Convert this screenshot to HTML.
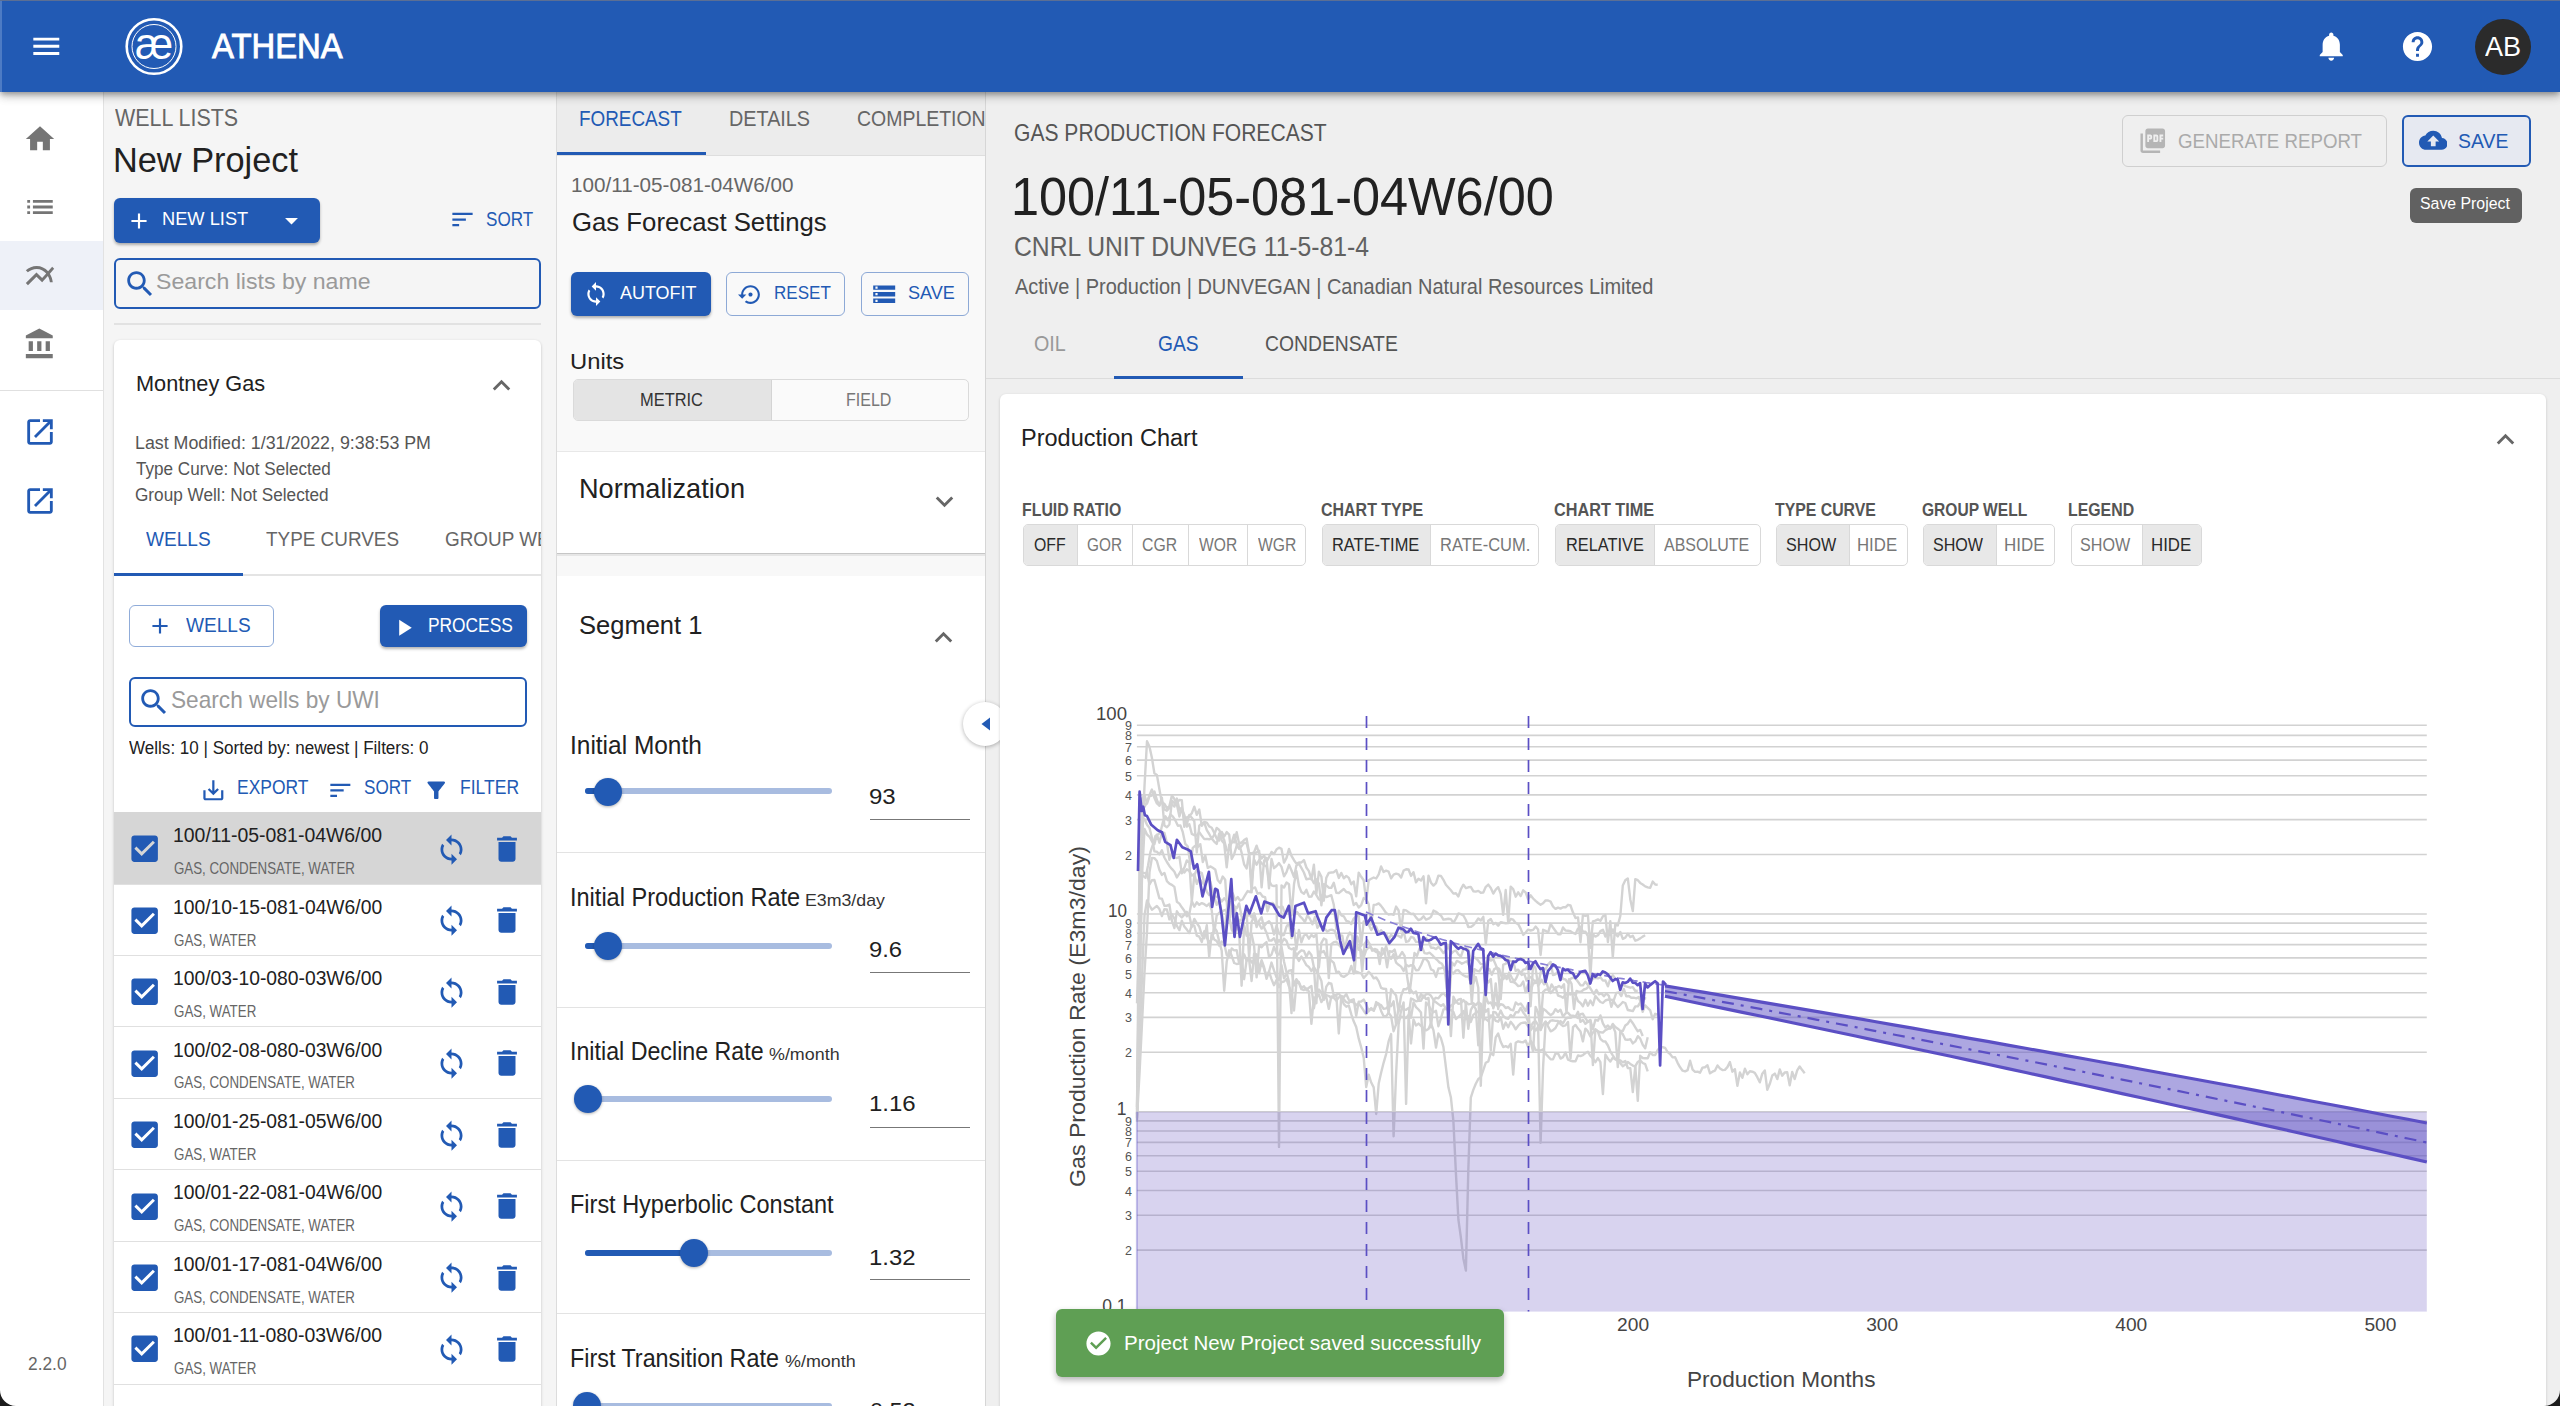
<!DOCTYPE html>
<html><head><meta charset="utf-8"><style>
html,body{margin:0;padding:0;width:2560px;height:1406px;overflow:hidden;background:#efefef;}
body{position:relative;font-family:"Liberation Sans",sans-serif;}
.t{position:absolute;white-space:nowrap;}
.r{position:absolute;}
</style></head><body>
<div class="r" style="left:0px;top:92px;width:103px;height:1314px;background:#fff"></div><div class="r" style="left:103px;top:92px;width:1px;height:1314px;background:#e2e2e2"></div><div class="r" style="left:104px;top:92px;width:452px;height:1314px;background:#f5f5f5"></div><div class="r" style="left:556px;top:92px;width:1px;height:1314px;background:#dcdcdc"></div><div class="r" style="left:557px;top:92px;width:428px;height:63px;background:#ececec"></div><div class="r" style="left:557px;top:155px;width:428px;height:1px;background:#dedede"></div><div class="r" style="left:557px;top:156px;width:428px;height:295px;background:#f9f9f9"></div><div class="r" style="left:557px;top:451px;width:428px;height:102px;background:#fff"></div><div class="r" style="left:557px;top:451px;width:428px;height:1px;background:#e8e8e8"></div><div class="r" style="left:557px;top:553px;width:428px;height:1px;background:#c6c6c6"></div><div class="r" style="left:557px;top:554px;width:428px;height:2px;background:#e6e6e6"></div><div class="r" style="left:557px;top:556px;width:428px;height:20px;background:#f8f8f8"></div><div class="r" style="left:557px;top:576px;width:428px;height:830px;background:#fff"></div><div class="r" style="left:557px;top:852px;width:428px;height:1px;background:#e3e3e3"></div><div class="r" style="left:557px;top:1007px;width:428px;height:1px;background:#e3e3e3"></div><div class="r" style="left:557px;top:1160px;width:428px;height:1px;background:#e3e3e3"></div><div class="r" style="left:557px;top:1313px;width:428px;height:1px;background:#e3e3e3"></div><div class="r" style="left:985px;top:92px;width:1px;height:1314px;background:#d6d6d6"></div><div class="r" style="left:0px;top:241px;width:103px;height:69px;background:#eef1f8"></div><svg class="r" style="left:23.0px;top:122.0px" width="34" height="34" viewBox="0 0 24 24"><path fill="#757575" d="M10 20v-6h4v6h5v-8h3L12 3 2 12h3v8z"/></svg><svg class="r" style="left:23.0px;top:190.0px" width="34" height="34" viewBox="0 0 24 24"><path fill="#757575" d="M3 13h2v-2H3v2zm0 4h2v-2H3v2zm0-8h2V7H3v2zm4 4h14v-2H7v2zm0 4h14v-2H7v2zM7 7v2h14V7H7z"/></svg><svg class="r" style="left:23.0px;top:259.0px" width="34" height="34" viewBox="0 0 24 24"><path fill="#757575" d="M22 6.92l-1.41-1.41-2.85 3.21C15.68 6.4 12.83 5 9.61 5 6.72 5 4.07 6.16 2 8l1.42 1.42C5.12 7.93 7.27 7 9.61 7c2.74 0 5.09 1.26 6.77 3.24l-2.88 3.24-4-4L2 16.99l1.5 1.5 6-6.01 4 4 4.05-4.55c.75 1.35 1.25 2.9 1.44 4.55H21c-.22-2.3-.95-4.39-2.04-6.14L22 6.92z"/></svg><svg class="r" style="left:23.0px;top:327.0px" width="34" height="34" viewBox="0 0 24 24"><path fill="#757575" d="M4 10v7h3v-7H4zm6 0v7h3v-7h-3zM2 22h19v-3H2v3zm14-12v7h3v-7h-3zm-4.5-9L2 6v2h19V6l-9.5-5z"/></svg><div class="r" style="left:0px;top:390px;width:103px;height:1px;background:#e0e0e0"></div><svg class="r" style="left:23.0px;top:415.0px" width="34" height="34" viewBox="0 0 24 24"><path fill="#225ab4" d="M19 19H5V5h7V3H5c-1.11 0-2 .9-2 2v14c0 1.1.89 2 2 2h14c1.1 0 2-.9 2-2v-7h-2v7zM14 3v2h3.59l-9.83 9.83 1.41 1.41L19 6.41V10h2V3h-7z"/></svg><svg class="r" style="left:23.0px;top:484.0px" width="34" height="34" viewBox="0 0 24 24"><path fill="#225ab4" d="M19 19H5V5h7V3H5c-1.11 0-2 .9-2 2v14c0 1.1.89 2 2 2h14c1.1 0 2-.9 2-2v-7h-2v7zM14 3v2h3.59l-9.83 9.83 1.41 1.41L19 6.41V10h2V3h-7z"/></svg><div class="t" style="left:28.33px;top:1356.31px;font-size:17.68px;line-height:17.68px;color:#666;transform:scaleX(0.9805);transform-origin:0 0;"><span>2.2.0</span></div><div class="t" style="left:115.41px;top:107.01px;font-size:23.19px;line-height:23.19px;color:#666;transform:scaleX(0.9249);transform-origin:0 0;"><span>WELL LISTS</span></div><div class="t" style="left:113.18px;top:143.01px;font-size:34.78px;line-height:34.78px;color:#212121;transform:scaleX(0.9869);transform-origin:0 0;"><span>New Project</span></div><div class="r" style="left:114px;top:198px;width:206px;height:45px;background:#225ab4;border-radius:6px;box-shadow:0 2px 3px rgba(0,0,0,.3)"></div><svg class="r" style="left:125.5px;top:207.5px" width="26" height="26" viewBox="0 0 24 24"><path fill="#fff" d="M19 13h-6v6h-2v-6H5v-2h6V5h2v6h6v2z"/></svg><div class="t" style="left:162.20px;top:209.80px;font-size:18.84px;line-height:18.84px;color:#fff;transform:scaleX(0.9695);transform-origin:0 0;"><span>NEW LIST</span></div><svg class="r" style="left:276.1px;top:204.9px" width="31" height="31" viewBox="0 0 24 24"><path fill="#fff" d="M7 10l5 5 5-5z"/></svg><svg class="r" style="left:449.0px;top:205.8px" width="27" height="27" viewBox="0 0 24 24"><path fill="#225ab4" d="M3 18h6v-2H3v2zM3 6v2h18V6H3zm0 7h12v-2H3v2z"/></svg><div class="t" style="left:486.22px;top:209.51px;font-size:19.57px;line-height:19.57px;color:#225ab4;transform:scaleX(0.8734);transform-origin:0 0;"><span>SORT</span></div><div class="r" style="left:114px;top:258px;width:427px;height:51px;border:2px solid #225ab4;border-radius:6px;box-sizing:border-box"></div><svg class="r" style="left:122.9px;top:266.9px" width="34" height="34" viewBox="0 0 24 24"><path fill="#225ab4" d="M15.5 14h-.79l-.28-.27C15.41 12.59 16 11.11 16 9.5 16 5.91 13.09 3 9.5 3S3 5.91 3 9.5 5.91 16 9.5 16c1.61 0 3.09-.59 4.23-1.57l.27.28v.79l5 4.99L20.49 19l-4.99-5zm-6 0C7.01 14 5 11.99 5 9.5S7.01 5 9.5 5 14 7.01 14 9.5 11.99 14 9.5 14z"/></svg><div class="t" style="left:156.45px;top:271.30px;font-size:22.46px;line-height:22.46px;color:#9a9a9a;transform:scaleX(1.0296);transform-origin:0 0;"><span>Search lists by name</span></div><div class="r" style="left:114px;top:323px;width:427px;height:2px;background:#e2e2e2"></div><div class="r" style="left:114px;top:340px;width:427px;height:1090px;background:#fff;border-radius:6px;box-shadow:0 1px 3px rgba(0,0,0,.22)"></div><div class="t" style="left:135.52px;top:372.61px;font-size:21.59px;line-height:21.59px;color:#212121;transform:scaleX(1.0056);transform-origin:0 0;"><span>Montney Gas</span></div><svg class="r" style="left:484.0px;top:367.9px" width="35" height="35" viewBox="0 0 24 24"><path fill="#666" d="M7.41 15.41L12 10.83l4.59 4.58L18 14l-6-6-6 6z"/></svg><div class="t" style="left:134.64px;top:434.20px;font-size:18.12px;line-height:18.12px;color:#555;transform:scaleX(0.9831);transform-origin:0 0;"><span>Last Modified: 1/31/2022, 9:38:53 PM</span></div><div class="t" style="left:135.72px;top:460.31px;font-size:18.12px;line-height:18.12px;color:#555;transform:scaleX(0.9444);transform-origin:0 0;"><span>Type Curve: Not Selected</span></div><div class="t" style="left:135.24px;top:485.70px;font-size:18.12px;line-height:18.12px;color:#555;transform:scaleX(0.9494);transform-origin:0 0;"><span>Group Well: Not Selected</span></div><div class="t" style="left:146.22px;top:529.00px;font-size:20.29px;line-height:20.29px;color:#225ab4;transform:scaleX(0.9403);transform-origin:0 0;"><span>WELLS</span></div><div class="t" style="left:265.88px;top:529.00px;font-size:20.29px;line-height:20.29px;color:#666;transform:scaleX(0.9315);transform-origin:0 0;"><span>TYPE CURVES</span></div><div class="r" style="left:0;top:0;width:541px;height:1406px;overflow:hidden"><div class="t" style="left:444.55px;top:529.00px;font-size:20.29px;line-height:20.29px;color:#666;transform:scaleX(0.9313);transform-origin:0 0;"><span>GROUP WELLS</span></div></div><div class="r" style="left:114px;top:574px;width:427px;height:2px;background:#e4e4e4"></div><div class="r" style="left:114px;top:573px;width:129px;height:3px;background:#225ab4"></div><div class="r" style="left:129px;top:605px;width:145px;height:42px;border:1px solid rgba(34,90,180,.5);border-radius:6px;box-sizing:border-box"></div><svg class="r" style="left:146.8px;top:613.0px" width="26" height="26" viewBox="0 0 24 24"><path fill="#225ab4" d="M19 13h-6v6h-2v-6H5v-2h6V5h2v6h6v2z"/></svg><div class="t" style="left:186.42px;top:614.92px;font-size:20.72px;line-height:20.72px;color:#225ab4;transform:scaleX(0.9204);transform-origin:0 0;"><span>WELLS</span></div><div class="r" style="left:380px;top:605px;width:147px;height:42px;background:#225ab4;border-radius:6px;box-shadow:0 2px 3px rgba(0,0,0,.3)"></div><svg class="r" style="left:390.1px;top:614.2px" width="27.5" height="27.5" viewBox="0 0 24 24"><path fill="#fff" d="M8 5v14l11-7z"/></svg><div class="t" style="left:427.98px;top:614.51px;font-size:20.72px;line-height:20.72px;color:#fff;transform:scaleX(0.8371);transform-origin:0 0;"><span>PROCESS</span></div><div class="r" style="left:129px;top:677px;width:398px;height:50px;border:2px solid #225ab4;border-radius:6px;box-sizing:border-box"></div><svg class="r" style="left:136.9px;top:684.9px" width="34" height="34" viewBox="0 0 24 24"><path fill="#225ab4" d="M15.5 14h-.79l-.28-.27C15.41 12.59 16 11.11 16 9.5 16 5.91 13.09 3 9.5 3S3 5.91 3 9.5 5.91 16 9.5 16c1.61 0 3.09-.59 4.23-1.57l.27.28v.79l5 4.99L20.49 19l-4.99-5zm-6 0C7.01 14 5 11.99 5 9.5S7.01 5 9.5 5 14 7.01 14 9.5 11.99 14 9.5 14z"/></svg><div class="t" style="left:171.37px;top:688.51px;font-size:23.19px;line-height:23.19px;color:#9a9a9a;transform:scaleX(0.9767);transform-origin:0 0;"><span>Search wells by UWI</span></div><div class="t" style="left:128.93px;top:738.51px;font-size:18.12px;line-height:18.12px;color:#212121;transform:scaleX(0.9417);transform-origin:0 0;"><span>Wells: 10 | Sorted by: newest | Filters: 0</span></div><svg class="r" style="left:199.6px;top:776.9px" width="26.7" height="26.7" viewBox="0 0 24 24"><path fill="#225ab4" d="M19 12v7H5v-7H3v7c0 1.1.9 2 2 2h14c1.1 0 2-.9 2-2v-7h-2zm-6 .67l2.59-2.58L17 11.5l-5 5-5-5 1.41-1.41L11 12.67V3h2z"/></svg><div class="t" style="left:236.57px;top:778.41px;font-size:19.86px;line-height:19.86px;color:#225ab4;transform:scaleX(0.8783);transform-origin:0 0;"><span>EXPORT</span></div><svg class="r" style="left:326.5px;top:776.9px" width="26.7" height="26.7" viewBox="0 0 24 24"><path fill="#225ab4" d="M3 18h6v-2H3v2zM3 6v2h18V6H3zm0 7h12v-2H3v2z"/></svg><div class="t" style="left:364.42px;top:778.41px;font-size:19.86px;line-height:19.86px;color:#225ab4;transform:scaleX(0.8604);transform-origin:0 0;"><span>SORT</span></div><svg class="r" style="left:423.4px;top:777.0px" width="26.5" height="26.5" viewBox="0 0 24 24"><path fill="#225ab4" d="M4.25 5.61C6.27 8.2 10 13 10 13v6c0 .55.45 1 1 1h2c.55 0 1-.45 1-1v-6s3.72-4.8 5.74-7.39c.51-.66.04-1.61-.79-1.61H5.04c-.83 0-1.3.95-.79 1.61z"/></svg><div class="t" style="left:460.46px;top:778.41px;font-size:19.86px;line-height:19.86px;color:#225ab4;transform:scaleX(0.8828);transform-origin:0 0;"><span>FILTER</span></div><div class="r" style="left:114px;top:812px;width:427px;height:72px;background:#d6d6d6"></div><div class="r" style="left:114px;top:884px;width:427px;height:1px;background:#e0e0e0"></div><div class="r" style="left:114px;top:955px;width:427px;height:1px;background:#e0e0e0"></div><div class="r" style="left:114px;top:1026px;width:427px;height:1px;background:#e0e0e0"></div><div class="r" style="left:114px;top:1098px;width:427px;height:1px;background:#e0e0e0"></div><div class="r" style="left:114px;top:1169px;width:427px;height:1px;background:#e0e0e0"></div><div class="r" style="left:114px;top:1241px;width:427px;height:1px;background:#e0e0e0"></div><div class="r" style="left:114px;top:1312px;width:427px;height:1px;background:#e0e0e0"></div><div class="r" style="left:114px;top:1384px;width:427px;height:1px;background:#e0e0e0"></div><svg class="r" style="left:126.8px;top:831.4px" width="35.3" height="35.3" viewBox="0 0 24 24"><path fill="#225ab4" d="M19 3H5c-1.11 0-2 .9-2 2v14c0 1.1.89 2 2 2h14c1.11 0 2-.9 2-2V5c0-1.1-.89-2-2-2zm-9 14l-5-5 1.41-1.41L10 14.17l7.59-7.59L19 8l-9 9z"/></svg><div class="t" style="left:173.12px;top:825.22px;font-size:20.29px;line-height:20.29px;color:#212121;transform:scaleX(0.9577);transform-origin:0 0;"><span>100/11-05-081-04W6/00</span></div><div class="t" style="left:173.93px;top:861.11px;font-size:16.81px;line-height:16.81px;color:#666;transform:scaleX(0.7925);transform-origin:0 0;"><span>GAS, CONDENSATE, WATER</span></div><svg class="r" style="left:435.0px;top:832.8px" width="33" height="33" viewBox="0 0 24 24"><path fill="#225ab4" d="M12 4V1L8 5l4 4V6c3.31 0 6 2.69 6 6 0 1.01-.25 1.97-.7 2.8l1.46 1.46C19.54 15.03 20 13.57 20 12c0-4.42-3.58-8-8-8zm0 14c-3.31 0-6-2.69-6-6 0-1.01.25-1.97.7-2.8L5.24 7.74C4.46 8.97 4 10.43 4 12c0 4.42 3.58 8 8 8v3l4-4-4-4v3z"/></svg><svg class="r" style="left:490.1px;top:832.0px" width="34" height="34" viewBox="0 0 24 24"><path fill="#225ab4" d="M6 19c0 1.1.9 2 2 2h8c1.1 0 2-.9 2-2V7H6v12zM19 4h-3.5l-1-1h-5l-1 1H5v2h14V4z"/></svg><svg class="r" style="left:126.8px;top:902.8px" width="35.3" height="35.3" viewBox="0 0 24 24"><path fill="#225ab4" d="M19 3H5c-1.11 0-2 .9-2 2v14c0 1.1.89 2 2 2h14c1.11 0 2-.9 2-2V5c0-1.1-.89-2-2-2zm-9 14l-5-5 1.41-1.41L10 14.17l7.59-7.59L19 8l-9 9z"/></svg><div class="t" style="left:173.13px;top:896.64px;font-size:20.29px;line-height:20.29px;color:#212121;transform:scaleX(0.9511);transform-origin:0 0;"><span>100/10-15-081-04W6/00</span></div><div class="t" style="left:173.93px;top:932.54px;font-size:16.81px;line-height:16.81px;color:#666;transform:scaleX(0.7942);transform-origin:0 0;"><span>GAS, WATER</span></div><svg class="r" style="left:435.0px;top:904.2px" width="33" height="33" viewBox="0 0 24 24"><path fill="#225ab4" d="M12 4V1L8 5l4 4V6c3.31 0 6 2.69 6 6 0 1.01-.25 1.97-.7 2.8l1.46 1.46C19.54 15.03 20 13.57 20 12c0-4.42-3.58-8-8-8zm0 14c-3.31 0-6-2.69-6-6 0-1.01.25-1.97.7-2.8L5.24 7.74C4.46 8.97 4 10.43 4 12c0 4.42 3.58 8 8 8v3l4-4-4-4v3z"/></svg><svg class="r" style="left:490.1px;top:903.4px" width="34" height="34" viewBox="0 0 24 24"><path fill="#225ab4" d="M6 19c0 1.1.9 2 2 2h8c1.1 0 2-.9 2-2V7H6v12zM19 4h-3.5l-1-1h-5l-1 1H5v2h14V4z"/></svg><svg class="r" style="left:126.8px;top:974.2px" width="35.3" height="35.3" viewBox="0 0 24 24"><path fill="#225ab4" d="M19 3H5c-1.11 0-2 .9-2 2v14c0 1.1.89 2 2 2h14c1.11 0 2-.9 2-2V5c0-1.1-.89-2-2-2zm-9 14l-5-5 1.41-1.41L10 14.17l7.59-7.59L19 8l-9 9z"/></svg><div class="t" style="left:173.13px;top:968.08px;font-size:20.29px;line-height:20.29px;color:#212121;transform:scaleX(0.9511);transform-origin:0 0;"><span>100/03-10-080-03W6/00</span></div><div class="t" style="left:173.93px;top:1003.97px;font-size:16.81px;line-height:16.81px;color:#666;transform:scaleX(0.7942);transform-origin:0 0;"><span>GAS, WATER</span></div><svg class="r" style="left:435.0px;top:975.7px" width="33" height="33" viewBox="0 0 24 24"><path fill="#225ab4" d="M12 4V1L8 5l4 4V6c3.31 0 6 2.69 6 6 0 1.01-.25 1.97-.7 2.8l1.46 1.46C19.54 15.03 20 13.57 20 12c0-4.42-3.58-8-8-8zm0 14c-3.31 0-6-2.69-6-6 0-1.01.25-1.97.7-2.8L5.24 7.74C4.46 8.97 4 10.43 4 12c0 4.42 3.58 8 8 8v3l4-4-4-4v3z"/></svg><svg class="r" style="left:490.1px;top:974.9px" width="34" height="34" viewBox="0 0 24 24"><path fill="#225ab4" d="M6 19c0 1.1.9 2 2 2h8c1.1 0 2-.9 2-2V7H6v12zM19 4h-3.5l-1-1h-5l-1 1H5v2h14V4z"/></svg><svg class="r" style="left:126.8px;top:1045.6px" width="35.3" height="35.3" viewBox="0 0 24 24"><path fill="#225ab4" d="M19 3H5c-1.11 0-2 .9-2 2v14c0 1.1.89 2 2 2h14c1.11 0 2-.9 2-2V5c0-1.1-.89-2-2-2zm-9 14l-5-5 1.41-1.41L10 14.17l7.59-7.59L19 8l-9 9z"/></svg><div class="t" style="left:173.13px;top:1039.50px;font-size:20.29px;line-height:20.29px;color:#212121;transform:scaleX(0.9511);transform-origin:0 0;"><span>100/02-08-080-03W6/00</span></div><div class="t" style="left:173.93px;top:1075.40px;font-size:16.81px;line-height:16.81px;color:#666;transform:scaleX(0.7925);transform-origin:0 0;"><span>GAS, CONDENSATE, WATER</span></div><svg class="r" style="left:435.0px;top:1047.1px" width="33" height="33" viewBox="0 0 24 24"><path fill="#225ab4" d="M12 4V1L8 5l4 4V6c3.31 0 6 2.69 6 6 0 1.01-.25 1.97-.7 2.8l1.46 1.46C19.54 15.03 20 13.57 20 12c0-4.42-3.58-8-8-8zm0 14c-3.31 0-6-2.69-6-6 0-1.01.25-1.97.7-2.8L5.24 7.74C4.46 8.97 4 10.43 4 12c0 4.42 3.58 8 8 8v3l4-4-4-4v3z"/></svg><svg class="r" style="left:490.1px;top:1046.3px" width="34" height="34" viewBox="0 0 24 24"><path fill="#225ab4" d="M6 19c0 1.1.9 2 2 2h8c1.1 0 2-.9 2-2V7H6v12zM19 4h-3.5l-1-1h-5l-1 1H5v2h14V4z"/></svg><svg class="r" style="left:126.8px;top:1117.1px" width="35.3" height="35.3" viewBox="0 0 24 24"><path fill="#225ab4" d="M19 3H5c-1.11 0-2 .9-2 2v14c0 1.1.89 2 2 2h14c1.11 0 2-.9 2-2V5c0-1.1-.89-2-2-2zm-9 14l-5-5 1.41-1.41L10 14.17l7.59-7.59L19 8l-9 9z"/></svg><div class="t" style="left:173.13px;top:1110.94px;font-size:20.29px;line-height:20.29px;color:#212121;transform:scaleX(0.9511);transform-origin:0 0;"><span>100/01-25-081-05W6/00</span></div><div class="t" style="left:173.93px;top:1146.83px;font-size:16.81px;line-height:16.81px;color:#666;transform:scaleX(0.7942);transform-origin:0 0;"><span>GAS, WATER</span></div><svg class="r" style="left:435.0px;top:1118.5px" width="33" height="33" viewBox="0 0 24 24"><path fill="#225ab4" d="M12 4V1L8 5l4 4V6c3.31 0 6 2.69 6 6 0 1.01-.25 1.97-.7 2.8l1.46 1.46C19.54 15.03 20 13.57 20 12c0-4.42-3.58-8-8-8zm0 14c-3.31 0-6-2.69-6-6 0-1.01.25-1.97.7-2.8L5.24 7.74C4.46 8.97 4 10.43 4 12c0 4.42 3.58 8 8 8v3l4-4-4-4v3z"/></svg><svg class="r" style="left:490.1px;top:1117.7px" width="34" height="34" viewBox="0 0 24 24"><path fill="#225ab4" d="M6 19c0 1.1.9 2 2 2h8c1.1 0 2-.9 2-2V7H6v12zM19 4h-3.5l-1-1h-5l-1 1H5v2h14V4z"/></svg><svg class="r" style="left:126.8px;top:1188.5px" width="35.3" height="35.3" viewBox="0 0 24 24"><path fill="#225ab4" d="M19 3H5c-1.11 0-2 .9-2 2v14c0 1.1.89 2 2 2h14c1.11 0 2-.9 2-2V5c0-1.1-.89-2-2-2zm-9 14l-5-5 1.41-1.41L10 14.17l7.59-7.59L19 8l-9 9z"/></svg><div class="t" style="left:173.13px;top:1182.36px;font-size:20.29px;line-height:20.29px;color:#212121;transform:scaleX(0.9511);transform-origin:0 0;"><span>100/01-22-081-04W6/00</span></div><div class="t" style="left:173.93px;top:1218.26px;font-size:16.81px;line-height:16.81px;color:#666;transform:scaleX(0.7925);transform-origin:0 0;"><span>GAS, CONDENSATE, WATER</span></div><svg class="r" style="left:435.0px;top:1190.0px" width="33" height="33" viewBox="0 0 24 24"><path fill="#225ab4" d="M12 4V1L8 5l4 4V6c3.31 0 6 2.69 6 6 0 1.01-.25 1.97-.7 2.8l1.46 1.46C19.54 15.03 20 13.57 20 12c0-4.42-3.58-8-8-8zm0 14c-3.31 0-6-2.69-6-6 0-1.01.25-1.97.7-2.8L5.24 7.74C4.46 8.97 4 10.43 4 12c0 4.42 3.58 8 8 8v3l4-4-4-4v3z"/></svg><svg class="r" style="left:490.1px;top:1189.2px" width="34" height="34" viewBox="0 0 24 24"><path fill="#225ab4" d="M6 19c0 1.1.9 2 2 2h8c1.1 0 2-.9 2-2V7H6v12zM19 4h-3.5l-1-1h-5l-1 1H5v2h14V4z"/></svg><svg class="r" style="left:126.8px;top:1259.9px" width="35.3" height="35.3" viewBox="0 0 24 24"><path fill="#225ab4" d="M19 3H5c-1.11 0-2 .9-2 2v14c0 1.1.89 2 2 2h14c1.11 0 2-.9 2-2V5c0-1.1-.89-2-2-2zm-9 14l-5-5 1.41-1.41L10 14.17l7.59-7.59L19 8l-9 9z"/></svg><div class="t" style="left:173.13px;top:1253.80px;font-size:20.29px;line-height:20.29px;color:#212121;transform:scaleX(0.9511);transform-origin:0 0;"><span>100/01-17-081-04W6/00</span></div><div class="t" style="left:173.93px;top:1289.70px;font-size:16.81px;line-height:16.81px;color:#666;transform:scaleX(0.7925);transform-origin:0 0;"><span>GAS, CONDENSATE, WATER</span></div><svg class="r" style="left:435.0px;top:1261.4px" width="33" height="33" viewBox="0 0 24 24"><path fill="#225ab4" d="M12 4V1L8 5l4 4V6c3.31 0 6 2.69 6 6 0 1.01-.25 1.97-.7 2.8l1.46 1.46C19.54 15.03 20 13.57 20 12c0-4.42-3.58-8-8-8zm0 14c-3.31 0-6-2.69-6-6 0-1.01.25-1.97.7-2.8L5.24 7.74C4.46 8.97 4 10.43 4 12c0 4.42 3.58 8 8 8v3l4-4-4-4v3z"/></svg><svg class="r" style="left:490.1px;top:1260.6px" width="34" height="34" viewBox="0 0 24 24"><path fill="#225ab4" d="M6 19c0 1.1.9 2 2 2h8c1.1 0 2-.9 2-2V7H6v12zM19 4h-3.5l-1-1h-5l-1 1H5v2h14V4z"/></svg><svg class="r" style="left:126.8px;top:1331.4px" width="35.3" height="35.3" viewBox="0 0 24 24"><path fill="#225ab4" d="M19 3H5c-1.11 0-2 .9-2 2v14c0 1.1.89 2 2 2h14c1.11 0 2-.9 2-2V5c0-1.1-.89-2-2-2zm-9 14l-5-5 1.41-1.41L10 14.17l7.59-7.59L19 8l-9 9z"/></svg><div class="t" style="left:173.12px;top:1325.22px;font-size:20.29px;line-height:20.29px;color:#212121;transform:scaleX(0.9577);transform-origin:0 0;"><span>100/01-11-080-03W6/00</span></div><div class="t" style="left:173.93px;top:1361.12px;font-size:16.81px;line-height:16.81px;color:#666;transform:scaleX(0.7942);transform-origin:0 0;"><span>GAS, WATER</span></div><svg class="r" style="left:435.0px;top:1332.8px" width="33" height="33" viewBox="0 0 24 24"><path fill="#225ab4" d="M12 4V1L8 5l4 4V6c3.31 0 6 2.69 6 6 0 1.01-.25 1.97-.7 2.8l1.46 1.46C19.54 15.03 20 13.57 20 12c0-4.42-3.58-8-8-8zm0 14c-3.31 0-6-2.69-6-6 0-1.01.25-1.97.7-2.8L5.24 7.74C4.46 8.97 4 10.43 4 12c0 4.42 3.58 8 8 8v3l4-4-4-4v3z"/></svg><svg class="r" style="left:490.1px;top:1332.0px" width="34" height="34" viewBox="0 0 24 24"><path fill="#225ab4" d="M6 19c0 1.1.9 2 2 2h8c1.1 0 2-.9 2-2V7H6v12zM19 4h-3.5l-1-1h-5l-1 1H5v2h14V4z"/></svg><div class="t" style="left:579.35px;top:108.41px;font-size:21.16px;line-height:21.16px;color:#225ab4;transform:scaleX(0.8913);transform-origin:0 0;"><span>FORECAST</span></div><div class="t" style="left:729.07px;top:108.41px;font-size:21.16px;line-height:21.16px;color:#666;transform:scaleX(0.9362);transform-origin:0 0;"><span>DETAILS</span></div><div class="r" style="left:0;top:0;width:985px;height:1406px;overflow:hidden"><div class="t" style="left:856.91px;top:108.41px;font-size:21.16px;line-height:21.16px;color:#666;transform:scaleX(0.9198);transform-origin:0 0;"><span>COMPLETION</span></div></div><div class="r" style="left:557px;top:152px;width:148.5px;height:3px;background:#225ab4"></div><div class="t" style="left:571.23px;top:176.01px;font-size:19.57px;line-height:19.57px;color:#666;transform:scaleX(1.0562);transform-origin:0 0;"><span>100/11-05-081-04W6/00</span></div><div class="t" style="left:571.50px;top:208.60px;font-size:26.09px;line-height:26.09px;color:#212121;transform:scaleX(0.9873);transform-origin:0 0;"><span>Gas Forecast Settings</span></div><div class="r" style="left:571.4px;top:272px;width:140.0px;height:43.80000000000001px;background:#225ab4;border-radius:6px;box-shadow:0 2px 3px rgba(0,0,0,.3)"></div><svg class="r" style="left:582.8px;top:281.0px" width="26" height="26" viewBox="0 0 24 24"><path fill="#fff" d="M12 4V1L8 5l4 4V6c3.31 0 6 2.69 6 6 0 1.01-.25 1.97-.7 2.8l1.46 1.46C19.54 15.03 20 13.57 20 12c0-4.42-3.58-8-8-8zm0 14c-3.31 0-6-2.69-6-6 0-1.01.25-1.97.7-2.8L5.24 7.74C4.46 8.97 4 10.43 4 12c0 4.42 3.58 8 8 8v3l4-4-4-4v3z"/></svg><div class="t" style="left:619.96px;top:283.00px;font-size:19.13px;line-height:19.13px;color:#fff;transform:scaleX(0.9391);transform-origin:0 0;"><span>AUTOFIT</span></div><div class="r" style="left:726.4px;top:272px;width:118.60000000000002px;height:44px;border:1px solid rgba(34,90,180,.5);border-radius:6px;box-sizing:border-box"></div><svg class="r" style="left:737.7px;top:281.5px" width="25" height="25" viewBox="0 0 24 24"><path fill="#225ab4" d="M14 12c0-1.1-.9-2-2-2s-2 .9-2 2 .9 2 2 2 2-.9 2-2zm-2-9c-4.97 0-9 4.03-9 9H0l4 4 4-4H5c0-3.87 3.13-7 7-7s7 3.13 7 7-3.13 7-7 7c-1.51 0-2.91-.49-4.06-1.3l-1.42 1.44C8.04 20.3 9.94 21 12 21c4.97 0 9-4.03 9-9s-4.03-9-9-9z"/></svg><div class="t" style="left:773.60px;top:283.00px;font-size:19.13px;line-height:19.13px;color:#225ab4;transform:scaleX(0.8912);transform-origin:0 0;"><span>RESET</span></div><div class="r" style="left:860.6px;top:272px;width:108.69999999999993px;height:44px;border:1px solid rgba(34,90,180,.5);border-radius:6px;box-sizing:border-box"></div><svg class="r" style="left:870.5px;top:280.8px" width="26.4" height="26.4" viewBox="0 0 24 24"><path fill="#225ab4" d="M2 20h20v-4H2v4zm2-3h2v2H4v-2zM2 4v4h20V4H2zm4 3H4V5h2v2zm-4 7h20v-4H2v4zm2-3h2v2H4v-2z"/></svg><div class="t" style="left:908.48px;top:283.00px;font-size:19.13px;line-height:19.13px;color:#225ab4;transform:scaleX(0.9450);transform-origin:0 0;"><span>SAVE</span></div><div class="t" style="left:570.16px;top:349.70px;font-size:22.75px;line-height:22.75px;color:#212121;transform:scaleX(1.0473);transform-origin:0 0;"><span>Units</span></div><div class="r" style="left:573px;top:379px;width:396px;height:42px;border:1px solid #dadada;border-radius:5px;box-sizing:border-box;background:#fafafa;overflow:hidden"></div><div class="r" style="left:574px;top:380px;width:196.70000000000005px;height:40px;background:#e4e4e4;border-radius:4px 0 0 4px"></div><div class="r" style="left:770.7px;top:380px;width:1.0px;height:40px;background:#d4d4d4"></div><div class="t" style="left:639.65px;top:391.40px;font-size:18.26px;line-height:18.26px;color:#333;transform:scaleX(0.9002);transform-origin:0 0;"><span>METRIC</span></div><div class="t" style="left:846.39px;top:391.40px;font-size:18.26px;line-height:18.26px;color:#777;transform:scaleX(0.8772);transform-origin:0 0;"><span>FIELD</span></div><div class="t" style="left:578.77px;top:474.71px;font-size:27.54px;line-height:27.54px;color:#212121;transform:scaleX(0.9862);transform-origin:0 0;"><span>Normalization</span></div><svg class="r" style="left:926.7px;top:483.5px" width="35" height="35" viewBox="0 0 24 24"><path fill="#666" d="M7.41 8.59L12 13.17l4.59-4.58L18 10l-6 6-6-6 1.41-1.41z"/></svg><div class="t" style="left:578.84px;top:611.50px;font-size:26.09px;line-height:26.09px;color:#212121;transform:scaleX(0.9784);transform-origin:0 0;"><span>Segment 1</span></div><svg class="r" style="left:926.0px;top:619.5px" width="35" height="35" viewBox="0 0 24 24"><path fill="#666" d="M7.41 15.41L12 10.83l4.59 4.58L18 14l-6-6-6 6z"/></svg><div class="t" style="left:569.74px;top:733.01px;font-size:24.93px;line-height:24.93px;color:#212121;transform:scaleX(0.9812);transform-origin:0 0;"><span>Initial Month</span></div><div class="r" style="left:585.4px;top:788px;width:247.10000000000002px;height:6px;background:#a8bce0;border-radius:3px"></div><div class="r" style="left:585.4px;top:788px;width:22.600000000000023px;height:6px;background:#225ab4;border-radius:3px"></div><div class="r" style="left:594px;top:777.5px;width:28px;height:28px;border-radius:50%;background:#225ab4;box-shadow:0 1px 3px rgba(0,0,0,.3)"></div><div class="t" style="left:869.38px;top:786.02px;font-size:22.61px;line-height:22.61px;color:#212121;transform:scaleX(1.0605);transform-origin:0 0;"><span>93</span></div><div class="r" style="left:870px;top:819px;width:100px;height:1px;background:#777"></div><div class="t" style="left:569.83px;top:884.71px;font-size:24.93px;line-height:24.93px;color:#212121;transform:scaleX(0.9442);transform-origin:0 0;"><span>Initial Production Rate</span></div><div class="t" style="left:805.14px;top:892.71px;font-size:16.96px;line-height:16.96px;color:#333;transform:scaleX(1.0476);transform-origin:0 0;"><span>E3m3/day</span></div><div class="r" style="left:585.4px;top:943px;width:247.10000000000002px;height:6px;background:#a8bce0;border-radius:3px"></div><div class="r" style="left:585.4px;top:943px;width:22.600000000000023px;height:6px;background:#225ab4;border-radius:3px"></div><div class="r" style="left:594px;top:932.4px;width:28px;height:28px;border-radius:50%;background:#225ab4;box-shadow:0 1px 3px rgba(0,0,0,.3)"></div><div class="t" style="left:869.39px;top:939.41px;font-size:22.61px;line-height:22.61px;color:#212121;transform:scaleX(1.0516);transform-origin:0 0;"><span>9.6</span></div><div class="r" style="left:870px;top:972px;width:100px;height:1px;background:#777"></div><div class="t" style="left:569.86px;top:1039.01px;font-size:24.93px;line-height:24.93px;color:#212121;transform:scaleX(0.9320);transform-origin:0 0;"><span>Initial Decline Rate</span></div><div class="t" style="left:769.36px;top:1047.01px;font-size:16.96px;line-height:16.96px;color:#333;transform:scaleX(1.0561);transform-origin:0 0;"><span>%/month</span></div><div class="r" style="left:585.4px;top:1096px;width:247.10000000000002px;height:6px;background:#a8bce0;border-radius:3px"></div><div class="r" style="left:585.4px;top:1096px;width:2.6000000000000227px;height:6px;background:#225ab4;border-radius:3px"></div><div class="r" style="left:574px;top:1084.9px;width:28px;height:28px;border-radius:50%;background:#225ab4;box-shadow:0 1px 3px rgba(0,0,0,.3)"></div><div class="t" style="left:868.67px;top:1093.30px;font-size:22.61px;line-height:22.61px;color:#212121;transform:scaleX(1.0605);transform-origin:0 0;"><span>1.16</span></div><div class="r" style="left:870px;top:1127px;width:100px;height:1px;background:#777"></div><div class="t" style="left:570.07px;top:1192.41px;font-size:24.93px;line-height:24.93px;color:#212121;transform:scaleX(0.9421);transform-origin:0 0;"><span>First Hyperbolic Constant</span></div><div class="r" style="left:585.4px;top:1250px;width:247.10000000000002px;height:6px;background:#a8bce0;border-radius:3px"></div><div class="r" style="left:585.4px;top:1250px;width:108.39999999999998px;height:6px;background:#225ab4;border-radius:3px"></div><div class="r" style="left:679.8px;top:1238.7px;width:28px;height:28px;border-radius:50%;background:#225ab4;box-shadow:0 1px 3px rgba(0,0,0,.3)"></div><div class="t" style="left:868.68px;top:1246.61px;font-size:22.61px;line-height:22.61px;color:#212121;transform:scaleX(1.0569);transform-origin:0 0;"><span>1.32</span></div><div class="r" style="left:870px;top:1279px;width:100px;height:1px;background:#777"></div><div class="t" style="left:570.08px;top:1346.01px;font-size:24.93px;line-height:24.93px;color:#212121;transform:scaleX(0.9370);transform-origin:0 0;"><span>First Transition Rate</span></div><div class="t" style="left:784.96px;top:1354.01px;font-size:16.96px;line-height:16.96px;color:#333;transform:scaleX(1.0577);transform-origin:0 0;"><span>%/month</span></div><div class="r" style="left:585.4px;top:1403px;width:247.10000000000002px;height:6px;background:#a8bce0;border-radius:3px"></div><div class="r" style="left:585.4px;top:1403px;width:1.6000000000000227px;height:6px;background:#225ab4;border-radius:3px"></div><div class="r" style="left:573px;top:1392px;width:28px;height:28px;border-radius:50%;background:#225ab4;box-shadow:0 1px 3px rgba(0,0,0,.3)"></div><div class="t" style="left:869.59px;top:1400.02px;font-size:22.61px;line-height:22.61px;color:#212121;transform:scaleX(1.0359);transform-origin:0 0;"><span>0.52</span></div><div class="r" style="left:870px;top:1433px;width:100px;height:1px;background:#777"></div><div class="r" style="left:963px;top:702px;width:44px;height:44px;border-radius:50%;background:#fff;box-shadow:0 1px 4px rgba(0,0,0,.3)"></div><svg class="r" style="left:978px;top:714px;" width="20" height="20" viewBox="0 0 20 20"><path fill="#225ab4" d="M12 3.5 L3.5 10 L12 16.5 Z"/></svg><div class="t" style="left:1013.64px;top:121.01px;font-size:24.64px;line-height:24.64px;color:#555;transform:scaleX(0.8558);transform-origin:0 0;"><span>GAS PRODUCTION FORECAST</span></div><div class="t" style="left:1011.16px;top:170.01px;font-size:53.62px;line-height:53.62px;color:#212121;transform:scaleX(0.9403);transform-origin:0 0;"><span>100/11-05-081-04W6/00</span></div><div class="t" style="left:1013.75px;top:232.71px;font-size:27.54px;line-height:27.54px;color:#616161;transform:scaleX(0.8970);transform-origin:0 0;"><span>CNRL UNIT DUNVEG 11-5-81-4</span></div><div class="t" style="left:1014.96px;top:276.30px;font-size:22.32px;line-height:22.32px;color:#616161;transform:scaleX(0.8951);transform-origin:0 0;"><span>Active | Production | DUNVEGAN | Canadian Natural Resources Limited</span></div><div class="t" style="left:1033.87px;top:333.41px;font-size:22.32px;line-height:22.32px;color:#999;transform:scaleX(0.8838);transform-origin:0 0;"><span>OIL</span></div><div class="t" style="left:1158.03px;top:333.41px;font-size:22.32px;line-height:22.32px;color:#225ab4;transform:scaleX(0.8604);transform-origin:0 0;"><span>GAS</span></div><div class="t" style="left:1265.02px;top:333.41px;font-size:22.32px;line-height:22.32px;color:#555;transform:scaleX(0.8661);transform-origin:0 0;"><span>CONDENSATE</span></div><div class="r" style="left:986px;top:378px;width:1574px;height:1px;background:#dcdcdc"></div><div class="r" style="left:1114.4px;top:375.5px;width:128.5999999999999px;height:3.0px;background:#225ab4"></div><div class="r" style="left:2122px;top:115.3px;width:264.5999999999999px;height:51.60000000000001px;border:1px solid #cfcfcf;border-radius:6px;box-sizing:border-box"></div><svg class="r" style="left:2137.9px;top:126.1px" width="29.5" height="29.5" viewBox="0 0 24 24"><path fill="#b5b5b5" d="M20 2H8c-1.1 0-2 .9-2 2v12c0 1.1.9 2 2 2h12c1.1 0 2-.9 2-2V4c0-1.1-.9-2-2-2zm-8.5 7.5c0 .83-.67 1.5-1.5 1.5H9v2H7.5V7H10c.83 0 1.5.67 1.5 1.5v1zm5 2c0 .83-.67 1.5-1.5 1.5h-2.5V7H15c.83 0 1.5.67 1.5 1.5v3zm4-3H19v1h1.5V11H19v2h-1.5V7h3v1.5zM9 9.5h1v-1H9v1zM4 6H2v14c0 1.1.9 2 2 2h14v-2H4V6zm10 5.5h1v-3h-1v3z"/></svg><div class="t" style="left:2178.46px;top:131.00px;font-size:20.29px;line-height:20.29px;color:#aaa;transform:scaleX(0.9205);transform-origin:0 0;"><span>GENERATE REPORT</span></div><div class="r" style="left:2402px;top:115px;width:129px;height:52px;border:2px solid #225ab4;border-radius:6px;box-sizing:border-box;background:#e6e9f1"></div><svg class="r" style="left:2418.6px;top:126.3px" width="28.5" height="28.5" viewBox="0 0 24 24"><path fill="#225ab4" d="M19.35 10.04C18.67 6.59 15.64 4 12 4 9.11 4 6.6 5.64 5.35 8.04 2.34 8.36 0 10.91 0 14c0 3.31 2.69 6 6 6h13c2.76 0 5-2.24 5-5 0-2.64-2.05-4.78-4.65-4.96zM14 13v4h-4v-4H7l5-5 5 5h-3z"/></svg><div class="t" style="left:2457.92px;top:131.00px;font-size:20.29px;line-height:20.29px;color:#225ab4;transform:scaleX(0.9574);transform-origin:0 0;"><span>SAVE</span></div><div class="r" style="left:2410.4px;top:188px;width:112.09999999999991px;height:35px;background:#616161;border-radius:6px"></div><div class="t" style="left:2420.28px;top:195.72px;font-size:16.67px;line-height:16.67px;color:#fff;transform:scaleX(0.9513);transform-origin:0 0;"><span>Save Project</span></div><div class="r" style="left:1000px;top:394px;width:1546px;height:1036px;background:#fff;border-radius:6px;box-shadow:0 1px 3px rgba(0,0,0,.18)"></div><div class="t" style="left:1021.37px;top:426.40px;font-size:24.64px;line-height:24.64px;color:#212121;transform:scaleX(0.9551);transform-origin:0 0;"><span>Production Chart</span></div><svg class="r" style="left:2487.5px;top:421.5px" width="35" height="35" viewBox="0 0 24 24"><path fill="#666" d="M7.41 15.41L12 10.83l4.59 4.58L18 14l-6-6-6 6z"/></svg><div class="t" style="left:1021.94px;top:499.81px;font-size:19.28px;line-height:19.28px;color:#555;transform:scaleX(0.8236);transform-origin:0 0;font-weight:700;"><span>FLUID RATIO</span></div><div class="t" style="left:1320.54px;top:499.81px;font-size:19.28px;line-height:19.28px;color:#555;transform:scaleX(0.8293);transform-origin:0 0;font-weight:700;"><span>CHART TYPE</span></div><div class="t" style="left:1554.13px;top:499.81px;font-size:19.28px;line-height:19.28px;color:#555;transform:scaleX(0.8426);transform-origin:0 0;font-weight:700;"><span>CHART TIME</span></div><div class="t" style="left:1774.82px;top:499.81px;font-size:19.28px;line-height:19.28px;color:#555;transform:scaleX(0.8210);transform-origin:0 0;font-weight:700;"><span>TYPE CURVE</span></div><div class="t" style="left:1921.86px;top:499.81px;font-size:19.28px;line-height:19.28px;color:#555;transform:scaleX(0.8079);transform-origin:0 0;font-weight:700;"><span>GROUP WELL</span></div><div class="t" style="left:2067.94px;top:499.81px;font-size:19.28px;line-height:19.28px;color:#555;transform:scaleX(0.8237);transform-origin:0 0;font-weight:700;"><span>LEGEND</span></div><div class="r" style="left:1023.3px;top:524px;width:283.10000000000014px;height:42px;border:1px solid #d9d9d9;border-radius:5px;box-sizing:border-box;overflow:hidden"><div class="r" style="left:0.0px;top:0;width:53.100000000000136px;height:42px;background:#e8e8e8"></div><div class="r" style="left:52.600000000000136px;top:0;width:1px;height:42px;background:#d9d9d9"></div><div class="r" style="left:108.20000000000005px;top:0;width:1px;height:42px;background:#d9d9d9"></div><div class="r" style="left:163.70000000000005px;top:0;width:1px;height:42px;background:#d9d9d9"></div><div class="r" style="left:222.4000000000001px;top:0;width:1px;height:42px;background:#d9d9d9"></div></div><div class="t" style="left:1034.00px;top:535.31px;font-size:19.28px;line-height:19.28px;color:#2a2a2a;transform:scaleX(0.8210);transform-origin:0 0;"><span>OFF</span></div><div class="t" style="left:1086.73px;top:535.31px;font-size:19.28px;line-height:19.28px;color:#777;transform:scaleX(0.7971);transform-origin:0 0;"><span>GOR</span></div><div class="t" style="left:1142.20px;top:535.31px;font-size:19.28px;line-height:19.28px;color:#777;transform:scaleX(0.8182);transform-origin:0 0;"><span>CGR</span></div><div class="t" style="left:1198.53px;top:535.31px;font-size:19.28px;line-height:19.28px;color:#777;transform:scaleX(0.8110);transform-origin:0 0;"><span>WOR</span></div><div class="t" style="left:1257.83px;top:535.31px;font-size:19.28px;line-height:19.28px;color:#777;transform:scaleX(0.8154);transform-origin:0 0;"><span>WGR</span></div><div class="r" style="left:1322px;top:524px;width:217.4000000000001px;height:42px;border:1px solid #d9d9d9;border-radius:5px;box-sizing:border-box;overflow:hidden"><div class="r" style="left:0px;top:0;width:107.79999999999995px;height:42px;background:#e8e8e8"></div><div class="r" style="left:107.29999999999995px;top:0;width:1px;height:42px;background:#d9d9d9"></div></div><div class="t" style="left:1332.15px;top:535.31px;font-size:19.28px;line-height:19.28px;color:#2a2a2a;transform:scaleX(0.8529);transform-origin:0 0;"><span>RATE-TIME</span></div><div class="t" style="left:1439.65px;top:535.31px;font-size:19.28px;line-height:19.28px;color:#777;transform:scaleX(0.8553);transform-origin:0 0;"><span>RATE-CUM.</span></div><div class="r" style="left:1555px;top:524px;width:205.70000000000005px;height:42px;border:1px solid #d9d9d9;border-radius:5px;box-sizing:border-box;overflow:hidden"><div class="r" style="left:0px;top:0;width:98.59999999999991px;height:42px;background:#e8e8e8"></div><div class="r" style="left:98.09999999999991px;top:0;width:1px;height:42px;background:#d9d9d9"></div></div><div class="t" style="left:1565.56px;top:535.31px;font-size:19.28px;line-height:19.28px;color:#2a2a2a;transform:scaleX(0.8484);transform-origin:0 0;"><span>RELATIVE</span></div><div class="t" style="left:1664.47px;top:535.31px;font-size:19.28px;line-height:19.28px;color:#777;transform:scaleX(0.8290);transform-origin:0 0;"><span>ABSOLUTE</span></div><div class="r" style="left:1776px;top:524px;width:131.79999999999995px;height:42px;border:1px solid #d9d9d9;border-radius:5px;box-sizing:border-box;overflow:hidden"><div class="r" style="left:0px;top:0;width:72.09999999999991px;height:42px;background:#e8e8e8"></div><div class="r" style="left:71.59999999999991px;top:0;width:1px;height:42px;background:#d9d9d9"></div></div><div class="t" style="left:1785.87px;top:535.31px;font-size:19.28px;line-height:19.28px;color:#2a2a2a;transform:scaleX(0.8373);transform-origin:0 0;"><span>SHOW</span></div><div class="t" style="left:1856.62px;top:535.31px;font-size:19.28px;line-height:19.28px;color:#777;transform:scaleX(0.8711);transform-origin:0 0;"><span>HIDE</span></div><div class="r" style="left:1923px;top:524px;width:132px;height:42px;border:1px solid #d9d9d9;border-radius:5px;box-sizing:border-box;overflow:hidden"><div class="r" style="left:0px;top:0;width:72px;height:42px;background:#e8e8e8"></div><div class="r" style="left:71.5px;top:0;width:1px;height:42px;background:#d9d9d9"></div></div><div class="t" style="left:1933.02px;top:535.31px;font-size:19.28px;line-height:19.28px;color:#2a2a2a;transform:scaleX(0.8348);transform-origin:0 0;"><span>SHOW</span></div><div class="t" style="left:2003.61px;top:535.31px;font-size:19.28px;line-height:19.28px;color:#777;transform:scaleX(0.8802);transform-origin:0 0;"><span>HIDE</span></div><div class="r" style="left:2071px;top:524px;width:131px;height:42px;border:1px solid #d9d9d9;border-radius:5px;box-sizing:border-box;overflow:hidden"><div class="r" style="left:70.90000000000009px;top:0;width:60.09999999999991px;height:42px;background:#e8e8e8"></div><div class="r" style="left:70.40000000000009px;top:0;width:1px;height:42px;background:#d9d9d9"></div></div><div class="t" style="left:2079.87px;top:535.31px;font-size:19.28px;line-height:19.28px;color:#777;transform:scaleX(0.8373);transform-origin:0 0;"><span>SHOW</span></div><div class="t" style="left:2151.12px;top:535.31px;font-size:19.28px;line-height:19.28px;color:#2a2a2a;transform:scaleX(0.8734);transform-origin:0 0;"><span>HIDE</span></div><svg class="r" style="left:0;top:0" width="2560" height="1406" viewBox="0 0 2560 1406"><line x1="1136.9" y1="1250.1" x2="2426.8" y2="1250.1" stroke="#d2d2d2" stroke-width="1.6"/><line x1="1136.9" y1="1215.2" x2="2426.8" y2="1215.2" stroke="#d2d2d2" stroke-width="1.6"/><line x1="1136.9" y1="1190.5" x2="2426.8" y2="1190.5" stroke="#d2d2d2" stroke-width="1.6"/><line x1="1136.9" y1="1171.3" x2="2426.8" y2="1171.3" stroke="#d2d2d2" stroke-width="1.6"/><line x1="1136.9" y1="1155.7" x2="2426.8" y2="1155.7" stroke="#d2d2d2" stroke-width="1.6"/><line x1="1136.9" y1="1142.4" x2="2426.8" y2="1142.4" stroke="#d2d2d2" stroke-width="1.6"/><line x1="1136.9" y1="1131.0" x2="2426.8" y2="1131.0" stroke="#d2d2d2" stroke-width="1.6"/><line x1="1136.9" y1="1120.9" x2="2426.8" y2="1120.9" stroke="#d2d2d2" stroke-width="1.6"/><line x1="1136.9" y1="1111.8" x2="2426.8" y2="1111.8" stroke="#d2d2d2" stroke-width="1.6"/><line x1="1136.9" y1="1052.3" x2="2426.8" y2="1052.3" stroke="#d2d2d2" stroke-width="1.6"/><line x1="1136.9" y1="1017.4" x2="2426.8" y2="1017.4" stroke="#d2d2d2" stroke-width="1.6"/><line x1="1136.9" y1="992.7" x2="2426.8" y2="992.7" stroke="#d2d2d2" stroke-width="1.6"/><line x1="1136.9" y1="973.5" x2="2426.8" y2="973.5" stroke="#d2d2d2" stroke-width="1.6"/><line x1="1136.9" y1="957.9" x2="2426.8" y2="957.9" stroke="#d2d2d2" stroke-width="1.6"/><line x1="1136.9" y1="944.6" x2="2426.8" y2="944.6" stroke="#d2d2d2" stroke-width="1.6"/><line x1="1136.9" y1="933.2" x2="2426.8" y2="933.2" stroke="#d2d2d2" stroke-width="1.6"/><line x1="1136.9" y1="923.1" x2="2426.8" y2="923.1" stroke="#d2d2d2" stroke-width="1.6"/><line x1="1136.9" y1="914.0" x2="2426.8" y2="914.0" stroke="#d2d2d2" stroke-width="1.6"/><line x1="1136.9" y1="854.5" x2="2426.8" y2="854.5" stroke="#d2d2d2" stroke-width="1.6"/><line x1="1136.9" y1="819.6" x2="2426.8" y2="819.6" stroke="#d2d2d2" stroke-width="1.6"/><line x1="1136.9" y1="794.9" x2="2426.8" y2="794.9" stroke="#d2d2d2" stroke-width="1.6"/><line x1="1136.9" y1="775.7" x2="2426.8" y2="775.7" stroke="#d2d2d2" stroke-width="1.6"/><line x1="1136.9" y1="760.1" x2="2426.8" y2="760.1" stroke="#d2d2d2" stroke-width="1.6"/><line x1="1136.9" y1="746.8" x2="2426.8" y2="746.8" stroke="#d2d2d2" stroke-width="1.6"/><line x1="1136.9" y1="735.4" x2="2426.8" y2="735.4" stroke="#d2d2d2" stroke-width="1.6"/><line x1="1136.9" y1="725.3" x2="2426.8" y2="725.3" stroke="#d2d2d2" stroke-width="1.6"/><path d="M1137.0,1003.4 L1139.5,918.8 L1142.0,845.0 L1144.5,786.0 L1147.0,741.3 L1149.5,746.8 L1151.9,757.8 L1154.4,773.3 L1156.9,774.9 L1159.4,789.2 L1161.9,802.6 L1164.4,803.8 L1166.9,808.2 L1169.4,806.1 L1171.9,795.5 L1174.4,799.0 L1176.9,804.5 L1179.4,816.5 L1181.8,808.6 L1184.3,814.9 L1186.8,824.5 L1189.3,815.0 L1191.8,817.8 L1194.3,821.2 L1196.8,852.5 L1199.3,825.6 L1201.8,823.4 L1204.3,822.7 L1206.8,830.2 L1209.2,834.0 L1211.7,838.8 L1214.2,834.9 L1216.7,827.9 L1219.2,830.0 L1221.7,834.9 L1224.2,840.0 L1226.7,850.4 L1229.2,849.9 L1231.7,841.9 L1234.2,842.4 L1236.7,832.2 L1239.1,843.4 L1241.6,842.5 L1244.1,840.1 L1246.6,838.5 L1249.1,853.0 L1251.6,853.4 L1254.1,852.3 L1256.6,845.7 L1259.1,853.3 L1261.6,858.4 L1264.1,855.5 L1266.5,861.6 L1269.0,857.1 L1271.5,851.9 L1274.0,854.1 L1276.5,849.5 L1279.0,847.6 L1281.5,848.9 L1284.0,862.6 L1286.5,857.9 L1289.0,848.9 L1291.5,855.8 L1294.0,860.2 L1296.4,863.6 L1298.9,862.5 L1301.4,862.5 L1303.9,860.0 L1306.4,867.5 L1308.9,871.1 L1311.4,879.4 L1313.9,864.8 L1316.4,893.5 L1318.9,871.7 L1321.4,876.7 L1323.8,900.7 L1326.3,877.7 L1328.8,872.9 L1331.3,872.5 L1333.8,872.2 L1336.3,870.1 L1338.8,877.9 L1341.3,872.9 L1343.8,878.3 L1346.3,875.9 L1348.8,877.9 L1351.3,884.3 L1353.7,881.5 L1356.2,896.3 L1358.7,872.7 L1361.2,876.8 L1363.7,880.3 L1366.2,900.8 L1368.7,880.3 L1371.2,878.8 L1373.7,877.5 L1376.2,878.5 L1378.7,874.3 L1381.1,866.4 L1383.6,871.9 L1386.1,870.7 L1388.6,871.6 L1391.1,878.4 L1393.6,874.6 L1396.1,873.6 L1398.6,874.3 L1401.1,877.5 L1403.6,870.6 L1406.1,869.3 L1408.6,869.5 L1411.0,875.9 L1413.5,872.3 L1416.0,882.4 L1418.5,878.8 L1421.0,880.5 L1423.5,876.3 L1426.0,903.3 L1428.5,875.6 L1431.0,882.7 L1433.5,885.6 L1436.0,883.2 L1438.4,875.6 L1440.9,875.9 L1443.4,879.8 L1445.9,884.8 L1448.4,887.5 L1450.9,890.2 L1453.4,893.6 L1455.9,893.3 L1458.4,896.4 L1460.9,889.1 L1463.4,884.7 L1465.9,888.1 L1468.3,887.3 L1470.8,886.9 L1473.3,891.2 L1475.8,891.6 L1478.3,890.9 L1480.8,892.7 L1483.3,892.5 L1485.8,886.8 L1488.3,884.6 L1490.8,888.0 L1493.3,893.6 L1495.7,889.7 L1498.2,887.2 L1500.7,893.9 L1503.2,914.9 L1505.7,890.0 L1508.2,922.5 L1510.7,886.7 L1513.2,889.2 L1515.7,896.7 L1518.2,892.3 L1520.7,896.1 L1523.2,890.3 L1525.6,892.4 L1528.1,899.4 L1530.6,895.3 L1533.1,898.5 L1535.6,900.9 L1538.1,903.0 L1540.6,904.7 L1543.1,903.3 L1545.6,900.4 L1548.1,900.5 L1550.6,901.6 L1553.0,906.5 L1555.5,908.9 L1558.0,907.6 L1560.5,908.6 L1563.0,907.3 L1565.5,907.3 L1568.0,904.8 L1570.5,905.5 L1573.0,912.6 L1575.5,918.0 L1578.0,917.4 L1580.5,942.2 L1582.9,915.0 L1585.4,915.9 L1587.9,915.0 L1590.4,947.9 L1592.9,921.3 L1595.4,920.6 L1597.9,919.4 L1600.4,920.8 L1602.9,916.3 L1605.4,915.0 L1607.9,942.1 L1610.3,921.2 L1612.8,957.2 L1615.3,924.3 L1617.8,925.4 L1620.3,916.0 L1622.8,885.5 L1625.3,880.3 L1627.8,878.4 L1630.3,899.4 L1632.8,911.1 L1635.3,879.2 L1637.8,880.2 L1640.2,882.9 L1642.7,884.5 L1645.2,886.4 L1647.7,887.3 L1650.2,887.9 L1652.7,881.6 L1655.2,884.6 L1657.7,884.8" fill="none" stroke="#d3d3d3" stroke-width="2.4" stroke-linejoin="round"/><path d="M1137.0,1107.1 L1139.5,957.5 L1142.0,810.3 L1144.5,806.9 L1147.0,802.1 L1149.5,795.0 L1151.9,789.5 L1154.4,797.8 L1156.9,803.4 L1159.4,805.7 L1161.9,797.6 L1164.4,825.6 L1166.9,827.3 L1169.4,824.5 L1171.9,800.6 L1174.4,803.1 L1176.9,803.3 L1179.4,799.9 L1181.8,800.1 L1184.3,826.8 L1186.8,817.4 L1189.3,816.3 L1191.8,813.3 L1194.3,806.7 L1196.8,814.8 L1199.3,809.6 L1201.8,825.8 L1204.3,822.0 L1206.8,822.7 L1209.2,826.4 L1211.7,827.7 L1214.2,832.6 L1216.7,838.5 L1219.2,840.5 L1221.7,831.9 L1224.2,836.5 L1226.7,832.1 L1229.2,834.6 L1231.7,859.0 L1234.2,854.2 L1236.7,845.5 L1239.1,848.8 L1241.6,846.1 L1244.1,842.8 L1246.6,843.1 L1249.1,853.8 L1251.6,892.3 L1254.1,854.3 L1256.6,852.4 L1259.1,850.7 L1261.6,887.4 L1264.1,860.5 L1266.5,857.9 L1269.0,888.3 L1271.5,859.0 L1274.0,868.2 L1276.5,866.0 L1279.0,863.1 L1281.5,866.9 L1284.0,876.3 L1286.5,872.1 L1289.0,864.8 L1291.5,870.5 L1294.0,877.1 L1296.4,865.6 L1298.9,863.7 L1301.4,867.9 L1303.9,872.5 L1306.4,879.3 L1308.9,878.8 L1311.4,878.2 L1313.9,883.2 L1316.4,879.3 L1318.9,883.5 L1321.4,905.3 L1323.8,884.2 L1326.3,885.4 L1328.8,887.7 L1331.3,887.9 L1333.8,882.8 L1336.3,892.8 L1338.8,893.1 L1341.3,891.0 L1343.8,889.0 L1346.3,892.0 L1348.8,892.5 L1351.3,894.7 L1353.7,905.0 L1356.2,903.0 L1358.7,907.5 L1361.2,905.2 L1363.7,898.1 L1366.2,899.3 L1368.7,904.3 L1371.2,924.5 L1373.7,904.9 L1376.2,904.6 L1378.7,903.4 L1381.1,905.9 L1383.6,909.3 L1386.1,913.0 L1388.6,914.5 L1391.1,914.1 L1393.6,914.8 L1396.1,906.6 L1398.6,910.5 L1401.1,930.6 L1403.6,910.0 L1406.1,910.4 L1408.6,912.2 L1411.0,914.0 L1413.5,913.8 L1416.0,917.4 L1418.5,920.1 L1421.0,919.1 L1423.5,916.2 L1426.0,919.6 L1428.5,918.7 L1431.0,916.9 L1433.5,910.6 L1436.0,911.8 L1438.4,913.7 L1440.9,915.4 L1443.4,919.6 L1445.9,919.2 L1448.4,918.8 L1450.9,919.1 L1453.4,922.8 L1455.9,918.6 L1458.4,913.5 L1460.9,914.2 L1463.4,915.5 L1465.9,920.0 L1468.3,927.0 L1470.8,926.9 L1473.3,925.2 L1475.8,922.2 L1478.3,918.5 L1480.8,920.5 L1483.3,916.8 L1485.8,944.2 L1488.3,920.7 L1490.8,919.0 L1493.3,924.2 L1495.7,922.9 L1498.2,925.7 L1500.7,922.1 L1503.2,922.7 L1505.7,923.2 L1508.2,923.1 L1510.7,919.0 L1513.2,919.7 L1515.7,923.0 L1518.2,924.1 L1520.7,928.9 L1523.2,934.9 L1525.6,932.6 L1528.1,929.6 L1530.6,930.5 L1533.1,929.9 L1535.6,926.6 L1538.1,929.6 L1540.6,955.0 L1543.1,929.8 L1545.6,930.8 L1548.1,932.6 L1550.6,923.8 L1553.0,927.5 L1555.5,931.0 L1558.0,934.4 L1560.5,934.4 L1563.0,927.5 L1565.5,930.6 L1568.0,930.7 L1570.5,931.2 L1573.0,932.9 L1575.5,933.9 L1578.0,928.6 L1580.5,926.8 L1582.9,931.5 L1585.4,931.7 L1587.9,936.2 L1590.4,976.7 L1592.9,934.3 L1595.4,936.6 L1597.9,935.3 L1600.4,931.1 L1602.9,929.7 L1605.4,936.5 L1607.9,931.3 L1610.3,935.0 L1612.8,929.4 L1615.3,933.9 L1617.8,936.4 L1620.3,932.0 L1622.8,938.9 L1625.3,937.7 L1627.8,933.8 L1630.3,937.1 L1632.8,935.7 L1635.3,940.7 L1637.8,939.8 L1640.2,938.4 L1642.7,936.6 L1645.2,935.3" fill="none" stroke="#d3d3d3" stroke-width="2.4" stroke-linejoin="round"/><path d="M1137.0,1114.1 L1139.5,924.5 L1142.0,799.0 L1144.5,795.2 L1147.0,803.5 L1149.5,796.2 L1151.9,795.5 L1154.4,791.4 L1156.9,800.0 L1159.4,805.5 L1161.9,800.4 L1164.4,809.4 L1166.9,810.7 L1169.4,808.2 L1171.9,804.4 L1174.4,806.6 L1176.9,798.6 L1179.4,809.8 L1181.8,807.6 L1184.3,819.1 L1186.8,826.6 L1189.3,824.2 L1191.8,833.9 L1194.3,835.1 L1196.8,835.5 L1199.3,832.1 L1201.8,835.8 L1204.3,839.1 L1206.8,838.9 L1209.2,839.3 L1211.7,838.4 L1214.2,841.6 L1216.7,843.9 L1219.2,833.5 L1221.7,840.4 L1224.2,843.5 L1226.7,867.3 L1229.2,844.7 L1231.7,842.5 L1234.2,834.7 L1236.7,844.2 L1239.1,844.1 L1241.6,852.7 L1244.1,864.3 L1246.6,868.5 L1249.1,853.6 L1251.6,882.8 L1254.1,859.5 L1256.6,864.7 L1259.1,860.1 L1261.6,863.3 L1264.1,865.2 L1266.5,866.4 L1269.0,880.6 L1271.5,885.3 L1274.0,886.1 L1276.5,885.3 L1279.0,1146.9 L1281.5,885.5 L1284.0,887.6 L1286.5,882.5 L1289.0,884.3 L1291.5,915.3 L1294.0,884.3 L1296.4,871.3 L1298.9,885.7 L1301.4,892.1 L1303.9,893.8 L1306.4,889.8 L1308.9,896.7 L1311.4,896.6 L1313.9,891.5 L1316.4,895.2 L1318.9,899.3 L1321.4,900.1 L1323.8,894.4 L1326.3,897.1 L1328.8,896.2 L1331.3,895.2 L1333.8,904.7 L1336.3,928.8 L1338.8,910.6 L1341.3,915.3 L1343.8,916.3 L1346.3,920.9 L1348.8,921.6 L1351.3,924.1 L1353.7,918.6 L1356.2,916.4 L1358.7,915.6 L1361.2,945.8 L1363.7,921.4 L1366.2,924.0 L1368.7,924.6 L1371.2,930.1 L1373.7,926.0 L1376.2,926.7 L1378.7,933.1 L1381.1,930.2 L1383.6,933.7 L1386.1,933.8 L1388.6,939.2 L1391.1,934.9 L1393.6,937.1 L1396.1,935.2 L1398.6,935.9 L1401.1,937.6 L1403.6,930.9 L1406.1,941.9 L1408.6,941.2 L1411.0,937.0 L1413.5,937.6 L1416.0,941.9 L1418.5,941.9 L1421.0,942.9 L1423.5,941.3 L1426.0,938.0 L1428.5,940.8 L1431.0,947.7 L1433.5,947.8 L1436.0,949.1 L1438.4,946.8 L1440.9,949.5 L1443.4,953.1 L1445.9,950.3 L1448.4,945.5 L1450.9,953.8 L1453.4,951.5 L1455.9,950.5 L1458.4,954.4 L1460.9,956.7 L1463.4,949.1 L1465.9,947.9 L1468.3,949.4 L1470.8,960.3 L1473.3,957.0 L1475.8,958.1 L1478.3,960.7 L1480.8,964.1 L1483.3,964.2 L1485.8,965.6 L1488.3,957.4 L1490.8,960.6 L1493.3,959.2 L1495.7,964.7 L1498.2,971.3 L1500.7,999.1 L1503.2,964.6 L1505.7,963.8 L1508.2,960.1 L1510.7,961.1 L1513.2,961.2 L1515.7,970.9 L1518.2,969.7 L1520.7,973.5 L1523.2,969.6 L1525.6,969.3 L1528.1,965.1 L1530.6,1006.2 L1533.1,964.4 L1535.6,968.4 L1538.1,985.8 L1540.6,972.5 L1543.1,968.7 L1545.6,969.3 L1548.1,964.4 L1550.6,961.9 L1553.0,975.1 L1555.5,974.3 L1558.0,971.5 L1560.5,974.2 L1563.0,978.9 L1565.5,979.5 L1568.0,982.7 L1570.5,978.8 L1573.0,977.7 L1575.5,978.6 L1578.0,981.8 L1580.5,985.2 L1582.9,985.4 L1585.4,981.7 L1587.9,984.9 L1590.4,982.4 L1592.9,978.5 L1595.4,977.8 L1597.9,978.3 L1600.4,977.3 L1602.9,980.6 L1605.4,980.5 L1607.9,986.3 L1610.3,978.8 L1612.8,975.3 L1615.3,978.8 L1617.8,980.6 L1620.3,986.1 L1622.8,984.2 L1625.3,986.2 L1627.8,986.8 L1630.3,987.7 L1632.8,987.1 L1635.3,991.0 L1637.8,990.6" fill="none" stroke="#d3d3d3" stroke-width="2.4" stroke-linejoin="round"/><path d="M1137.0,1117.5 L1139.5,996.9 L1142.0,876.8 L1144.5,828.9 L1147.0,834.5 L1149.5,836.8 L1151.9,841.2 L1154.4,844.3 L1156.9,834.7 L1159.4,842.7 L1161.9,832.5 L1164.4,832.9 L1166.9,842.8 L1169.4,859.7 L1171.9,853.0 L1174.4,857.6 L1176.9,858.0 L1179.4,856.7 L1181.8,873.3 L1184.3,867.8 L1186.8,860.5 L1189.3,862.5 L1191.8,901.4 L1194.3,875.2 L1196.8,869.7 L1199.3,871.9 L1201.8,873.1 L1204.3,883.1 L1206.8,881.7 L1209.2,877.3 L1211.7,887.4 L1214.2,896.2 L1216.7,904.8 L1219.2,900.7 L1221.7,912.1 L1224.2,910.1 L1226.7,910.9 L1229.2,906.3 L1231.7,902.9 L1234.2,906.3 L1236.7,915.2 L1239.1,921.3 L1241.6,919.3 L1244.1,918.3 L1246.6,911.5 L1249.1,958.1 L1251.6,921.7 L1254.1,916.8 L1256.6,927.0 L1259.1,920.6 L1261.6,917.2 L1264.1,927.6 L1266.5,932.7 L1269.0,940.5 L1271.5,940.5 L1274.0,938.2 L1276.5,943.8 L1279.0,940.1 L1281.5,943.3 L1284.0,938.7 L1286.5,941.0 L1289.0,948.0 L1291.5,949.3 L1294.0,948.2 L1296.4,956.7 L1298.9,960.9 L1301.4,956.5 L1303.9,960.7 L1306.4,965.1 L1308.9,967.0 L1311.4,971.1 L1313.9,967.2 L1316.4,970.9 L1318.9,975.6 L1321.4,981.0 L1323.8,999.8 L1326.3,986.6 L1328.8,982.8 L1331.3,983.6 L1333.8,996.0 L1336.3,994.7 L1338.8,993.3 L1341.3,997.5 L1343.8,1004.2 L1346.3,1006.7 L1348.8,1005.5 L1351.3,1014.4 L1353.7,1021.3 L1356.2,1027.0 L1358.7,1038.4 L1361.2,1047.4 L1363.7,1057.6 L1366.2,1087.1 L1368.7,1074.7 L1371.2,1082.5 L1373.7,1087.4 L1376.2,1114.0 L1378.7,1083.6 L1381.1,1072.7 L1383.6,1062.8 L1386.1,1054.1 L1388.6,1041.4 L1391.1,1034.1 L1393.6,1136.3 L1396.1,1073.9 L1398.6,1024.5 L1401.1,1010.5 L1403.6,1002.4 L1406.1,1103.9 L1408.6,1015.9 L1411.0,998.5 L1413.5,999.7 L1416.0,1001.2 L1418.5,1000.9 L1421.0,1000.8 L1423.5,995.5 L1426.0,999.1 L1428.5,997.9 L1431.0,1027.4 L1433.5,1000.5 L1436.0,1002.3 L1438.4,1004.1 L1440.9,1005.9 L1443.4,1004.2 L1445.9,1008.9 L1448.4,1009.1 L1450.9,1005.8 L1453.4,1004.0 L1455.9,1001.7 L1458.4,1003.9 L1460.9,1003.3 L1463.4,1000.1 L1465.9,1003.3 L1468.3,1028.9 L1470.8,1010.1 L1473.3,1005.2 L1475.8,1009.1 L1478.3,1045.4 L1480.8,1008.6 L1483.3,1007.2 L1485.8,1011.7 L1488.3,1008.9 L1490.8,1050.4 L1493.3,1011.9 L1495.7,1012.4 L1498.2,1016.6 L1500.7,1010.5 L1503.2,1015.9 L1505.7,1018.0 L1508.2,1018.9 L1510.7,1015.0 L1513.2,1017.1 L1515.7,1012.2 L1518.2,1012.3 L1520.7,1007.9 L1523.2,1012.5 L1525.6,1015.4 L1528.1,1021.4 L1530.6,1026.9 L1533.1,1022.6 L1535.6,1021.2 L1538.1,1025.1 L1540.6,1142.8 L1543.1,1066.9 L1545.6,1022.4 L1548.1,1023.8 L1550.6,1020.6 L1553.0,1020.3 L1555.5,1020.9 L1558.0,1021.0 L1560.5,1024.1 L1563.0,1026.1 L1565.5,1025.4 L1568.0,1021.9 L1570.5,1058.3 L1573.0,1027.1 L1575.5,1024.9 L1578.0,1028.6 L1580.5,1031.6 L1582.9,1041.4 L1585.4,1028.6 L1587.9,1031.4 L1590.4,1036.6 L1592.9,1032.7 L1595.4,1029.4 L1597.9,1031.3 L1600.4,1032.3 L1602.9,1032.6 L1605.4,1030.2 L1607.9,1028.9 L1610.3,1028.3 L1612.8,1026.0 L1615.3,1032.1 L1617.8,1067.1 L1620.3,1032.0 L1622.8,1034.2 L1625.3,1039.5 L1627.8,1039.8 L1630.3,1039.2 L1632.8,1043.4 L1635.3,1041.4 L1637.8,1036.2 L1640.2,1038.6 L1642.7,1044.8 L1645.2,1048.2 L1647.7,1037.3" fill="none" stroke="#d3d3d3" stroke-width="2.4" stroke-linejoin="round"/><path d="M1137.0,1121.8 L1139.5,993.8 L1142.0,872.4 L1144.5,873.1 L1147.0,873.0 L1149.5,884.3 L1151.9,880.2 L1154.4,880.0 L1156.9,889.1 L1159.4,898.4 L1161.9,898.7 L1164.4,905.8 L1166.9,905.7 L1169.4,904.6 L1171.9,920.6 L1174.4,928.1 L1176.9,911.3 L1179.4,915.2 L1181.8,917.4 L1184.3,914.6 L1186.8,911.8 L1189.3,915.6 L1191.8,927.0 L1194.3,918.9 L1196.8,923.1 L1199.3,926.7 L1201.8,935.2 L1204.3,938.3 L1206.8,925.3 L1209.2,956.8 L1211.7,933.1 L1214.2,939.4 L1216.7,941.0 L1219.2,945.7 L1221.7,941.5 L1224.2,943.6 L1226.7,954.9 L1229.2,956.5 L1231.7,948.5 L1234.2,950.4 L1236.7,950.2 L1239.1,963.2 L1241.6,959.1 L1244.1,979.2 L1246.6,960.1 L1249.1,959.6 L1251.6,981.0 L1254.1,953.7 L1256.6,954.3 L1259.1,973.2 L1261.6,961.8 L1264.1,968.9 L1266.5,976.0 L1269.0,971.7 L1271.5,979.1 L1274.0,985.2 L1276.5,980.1 L1279.0,987.2 L1281.5,982.2 L1284.0,981.5 L1286.5,979.0 L1289.0,986.5 L1291.5,992.0 L1294.0,1010.5 L1296.4,983.3 L1298.9,982.1 L1301.4,987.9 L1303.9,986.2 L1306.4,990.2 L1308.9,987.7 L1311.4,986.0 L1313.9,1008.2 L1316.4,994.4 L1318.9,989.5 L1321.4,992.5 L1323.8,999.5 L1326.3,995.0 L1328.8,996.0 L1331.3,998.0 L1333.8,996.0 L1336.3,994.8 L1338.8,1033.5 L1341.3,996.1 L1343.8,999.4 L1346.3,1002.2 L1348.8,1003.0 L1351.3,1000.1 L1353.7,999.3 L1356.2,1015.9 L1358.7,1001.7 L1361.2,1001.5 L1363.7,999.6 L1366.2,1004.4 L1368.7,1011.3 L1371.2,1008.1 L1373.7,1010.8 L1376.2,1002.1 L1378.7,1004.2 L1381.1,1005.1 L1383.6,1008.9 L1386.1,1008.3 L1388.6,1006.1 L1391.1,1006.1 L1393.6,1001.3 L1396.1,1024.8 L1398.6,1006.8 L1401.1,1006.4 L1403.6,1009.4 L1406.1,1009.7 L1408.6,1008.0 L1411.0,1017.7 L1413.5,1002.4 L1416.0,1007.1 L1418.5,1009.5 L1421.0,1012.6 L1423.5,1048.6 L1426.0,1002.5 L1428.5,1005.3 L1431.0,1009.5 L1433.5,1012.2 L1436.0,1010.8 L1438.4,1026.2 L1440.9,1018.4 L1443.4,1009.7 L1445.9,1008.6 L1448.4,1010.1 L1450.9,1010.0 L1453.4,1012.0 L1455.9,1019.0 L1458.4,1016.8 L1460.9,1014.5 L1463.4,1011.1 L1465.9,1019.3 L1468.3,1016.1 L1470.8,1021.9 L1473.3,1014.9 L1475.8,1012.9 L1478.3,1011.4 L1480.8,1013.7 L1483.3,1019.1 L1485.8,1019.1 L1488.3,1021.1 L1490.8,1015.4 L1493.3,1016.2 L1495.7,1020.9 L1498.2,1021.7 L1500.7,1017.2 L1503.2,1028.8 L1505.7,1022.5 L1508.2,1027.2 L1510.7,1021.8 L1513.2,1024.9 L1515.7,1029.3 L1518.2,1025.7 L1520.7,1023.3 L1523.2,1022.7 L1525.6,1022.5 L1528.1,1026.3 L1530.6,1030.2 L1533.1,1027.0 L1535.6,1030.5 L1538.1,1026.8 L1540.6,1030.0 L1543.1,1024.7 L1545.6,1021.5 L1548.1,1026.5 L1550.6,1031.3 L1553.0,1030.2 L1555.5,1028.0 L1558.0,1023.2 L1560.5,1021.1 L1563.0,1023.3 L1565.5,1019.0 L1568.0,1017.7 L1570.5,1017.9 L1573.0,1016.5 L1575.5,1016.8 L1578.0,1011.8 L1580.5,1021.9 L1582.9,1019.9 L1585.4,1023.8 L1587.9,1021.5 L1590.4,1020.1 L1592.9,1065.1 L1595.4,1029.3 L1597.9,1031.5 L1600.4,1038.9 L1602.9,1041.2 L1605.4,1041.5 L1607.9,1045.5 L1610.3,1051.3 L1612.8,1055.4 L1615.3,1059.2 L1617.8,1060.8 L1620.3,1063.2 L1622.8,1066.3 L1625.3,1064.6 L1627.8,1062.0 L1630.3,1063.9 L1632.8,1065.6 L1635.3,1066.7 L1637.8,1100.9 L1640.2,1055.8 L1642.7,1058.0 L1645.2,1058.2 L1647.7,1058.2 L1650.2,1052.3 L1652.7,1055.0 L1655.2,1055.0 L1657.7,1050.0 L1660.2,1047.2 L1662.7,1047.2 L1665.2,1048.0 L1667.6,1052.0 L1670.1,1054.0 L1672.6,1057.4 L1675.1,1057.3 L1677.6,1062.8 L1680.1,1067.3 L1682.6,1070.7 L1685.1,1071.4 L1687.6,1070.1 L1690.1,1060.7 L1692.6,1069.6 L1695.1,1071.9 L1697.5,1071.6 L1700.0,1072.7 L1702.5,1067.6 L1705.0,1067.2 L1707.5,1065.3 L1710.0,1073.3 L1712.5,1071.7 L1715.0,1070.6 L1717.5,1065.4 L1720.0,1068.4 L1722.5,1070.1 L1724.9,1069.9 L1727.4,1067.1 L1729.9,1062.0 L1732.4,1071.7 L1734.9,1069.2 L1737.4,1085.9 L1739.9,1072.5 L1742.4,1077.8 L1744.9,1068.7 L1747.4,1074.3 L1749.9,1071.3 L1752.4,1071.7 L1754.8,1072.8 L1757.3,1077.2 L1759.8,1082.3 L1762.3,1073.7 L1764.8,1070.5 L1767.3,1089.9 L1769.8,1083.8 L1772.3,1075.5 L1774.8,1073.6 L1777.3,1079.1 L1779.8,1069.4 L1782.2,1075.7 L1784.7,1072.5 L1787.2,1072.3 L1789.7,1085.3 L1792.2,1072.0 L1794.7,1079.0 L1797.2,1070.4 L1799.7,1066.5 L1802.2,1070.1 L1804.7,1073.2" fill="none" stroke="#d3d3d3" stroke-width="2.4" stroke-linejoin="round"/><path d="M1137.0,1115.3 L1139.5,1044.4 L1142.0,977.7 L1144.5,915.4 L1147.0,900.5 L1149.5,905.5 L1151.9,909.7 L1154.4,907.9 L1156.9,906.0 L1159.4,909.1 L1161.9,916.1 L1164.4,909.2 L1166.9,909.5 L1169.4,919.4 L1171.9,914.4 L1174.4,918.6 L1176.9,925.8 L1179.4,930.1 L1181.8,920.7 L1184.3,926.4 L1186.8,929.6 L1189.3,933.0 L1191.8,925.3 L1194.3,925.8 L1196.8,935.6 L1199.3,936.7 L1201.8,941.9 L1204.3,931.2 L1206.8,937.4 L1209.2,942.7 L1211.7,939.4 L1214.2,927.5 L1216.7,931.0 L1219.2,941.6 L1221.7,950.6 L1224.2,990.7 L1226.7,961.8 L1229.2,950.3 L1231.7,955.8 L1234.2,963.0 L1236.7,964.0 L1239.1,963.6 L1241.6,959.3 L1244.1,954.3 L1246.6,960.8 L1249.1,957.3 L1251.6,962.5 L1254.1,960.1 L1256.6,966.5 L1259.1,967.6 L1261.6,960.2 L1264.1,967.2 L1266.5,978.8 L1269.0,971.8 L1271.5,962.6 L1274.0,970.4 L1276.5,977.4 L1279.0,980.1 L1281.5,965.3 L1284.0,978.2 L1286.5,974.5 L1289.0,970.6 L1291.5,970.1 L1294.0,985.5 L1296.4,979.2 L1298.9,982.9 L1301.4,989.2 L1303.9,990.0 L1306.4,988.4 L1308.9,991.6 L1311.4,1023.8 L1313.9,997.4 L1316.4,997.7 L1318.9,994.4 L1321.4,1002.1 L1323.8,998.1 L1326.3,997.3 L1328.8,1008.9 L1331.3,996.4 L1333.8,997.7 L1336.3,1000.6 L1338.8,997.6 L1341.3,995.9 L1343.8,997.3 L1346.3,994.0 L1348.8,999.8 L1351.3,1001.9 L1353.7,1002.3 L1356.2,1005.2 L1358.7,1003.4 L1361.2,1006.9 L1363.7,1010.7 L1366.2,1014.3 L1368.7,1009.7 L1371.2,1009.2 L1373.7,1010.5 L1376.2,1005.2 L1378.7,1003.6 L1381.1,1010.9 L1383.6,1016.2 L1386.1,1016.3 L1388.6,1012.6 L1391.1,1016.2 L1393.6,1031.2 L1396.1,1024.4 L1398.6,1020.5 L1401.1,1016.8 L1403.6,1017.2 L1406.1,1018.1 L1408.6,1015.1 L1411.0,1043.5 L1413.5,1019.5 L1416.0,1025.5 L1418.5,1023.6 L1421.0,1025.9 L1423.5,1028.2 L1426.0,1030.4 L1428.5,1029.0 L1431.0,1023.3 L1433.5,1030.4 L1436.0,1047.5 L1438.4,1033.5 L1440.9,1038.0 L1443.4,1046.8 L1445.9,1067.2 L1448.4,1087.3 L1450.9,1097.5 L1453.4,1121.2 L1455.9,1172.9 L1458.4,1219.7 L1460.9,1237.6 L1463.4,1258.7 L1465.9,1270.6 L1468.3,1170.4 L1470.8,1097.6 L1473.3,1089.9 L1475.8,1083.8 L1478.3,1079.0 L1480.8,1077.2 L1483.3,1070.2 L1485.8,1062.7 L1488.3,1061.4 L1490.8,1052.9 L1493.3,1055.2 L1495.7,1037.4 L1498.2,1033.5 L1500.7,1041.8 L1503.2,1047.1 L1505.7,1046.2 L1508.2,1047.4 L1510.7,1043.7 L1513.2,1074.6 L1515.7,1042.8 L1518.2,1041.3 L1520.7,1042.0 L1523.2,1042.3 L1525.6,1040.5 L1528.1,1046.7 L1530.6,1040.8 L1533.1,1044.2 L1535.6,1050.1 L1538.1,1050.0 L1540.6,1050.5 L1543.1,1049.4 L1545.6,1053.9 L1548.1,1056.5 L1550.6,1059.3 L1553.0,1059.4 L1555.5,1053.5 L1558.0,1053.3 L1560.5,1058.6 L1563.0,1057.1 L1565.5,1052.5 L1568.0,1059.6 L1570.5,1060.7 L1573.0,1061.2 L1575.5,1061.3 L1578.0,1055.4 L1580.5,1056.1 L1582.9,1055.2 L1585.4,1053.0 L1587.9,1051.8 L1590.4,1056.0 L1592.9,1058.5 L1595.4,1062.2 L1597.9,1058.0 L1600.4,1062.1 L1602.9,1094.1 L1605.4,1054.5 L1607.9,1058.7 L1610.3,1061.6 L1612.8,1057.7 L1615.3,1059.2 L1617.8,1059.9 L1620.3,1060.4 L1622.8,1062.4 L1625.3,1061.0 L1627.8,1068.0 L1630.3,1068.3 L1632.8,1092.1 L1635.3,1066.2 L1637.8,1061.9 L1640.2,1060.4 L1642.7,1063.0 L1645.2,1064.1 L1647.7,1071.3" fill="none" stroke="#d3d3d3" stroke-width="2.4" stroke-linejoin="round"/><path d="M1137.0,1109.4 L1139.5,857.8 L1142.0,821.2 L1144.5,819.1 L1147.0,824.7 L1149.5,828.0 L1151.9,837.5 L1154.4,851.4 L1156.9,851.7 L1159.4,854.4 L1161.9,850.3 L1164.4,857.5 L1166.9,862.0 L1169.4,865.9 L1171.9,868.9 L1174.4,871.7 L1176.9,877.4 L1179.4,873.4 L1181.8,869.3 L1184.3,872.6 L1186.8,869.2 L1189.3,870.9 L1191.8,875.6 L1194.3,874.1 L1196.8,883.9 L1199.3,878.3 L1201.8,882.2 L1204.3,884.7 L1206.8,891.7 L1209.2,895.1 L1211.7,894.6 L1214.2,896.8 L1216.7,896.7 L1219.2,897.6 L1221.7,901.6 L1224.2,898.2 L1226.7,901.0 L1229.2,901.7 L1231.7,902.7 L1234.2,906.2 L1236.7,908.2 L1239.1,903.4 L1241.6,916.9 L1244.1,918.3 L1246.6,917.4 L1249.1,914.1 L1251.6,917.3 L1254.1,913.3 L1256.6,921.7 L1259.1,923.9 L1261.6,928.6 L1264.1,926.0 L1266.5,922.9 L1269.0,921.2 L1271.5,924.5 L1274.0,934.5 L1276.5,926.1 L1279.0,933.5 L1281.5,935.2 L1284.0,935.0 L1286.5,926.6 L1289.0,923.0 L1291.5,938.1 L1294.0,929.1 L1296.4,949.5 L1298.9,930.0 L1301.4,942.4 L1303.9,935.5 L1306.4,934.5 L1308.9,938.7 L1311.4,934.9 L1313.9,937.0 L1316.4,934.1 L1318.9,967.4 L1321.4,942.8 L1323.8,938.5 L1326.3,939.9 L1328.8,978.1 L1331.3,944.2 L1333.8,942.1 L1336.3,941.8 L1338.8,944.7 L1341.3,947.8 L1343.8,950.0 L1346.3,948.1 L1348.8,947.6 L1351.3,942.8 L1353.7,941.3 L1356.2,942.6 L1358.7,949.8 L1361.2,950.0 L1363.7,957.3 L1366.2,950.0 L1368.7,947.4 L1371.2,947.8 L1373.7,950.3 L1376.2,952.1 L1378.7,952.0 L1381.1,955.3 L1383.6,953.1 L1386.1,946.1 L1388.6,955.5 L1391.1,958.7 L1393.6,954.1 L1396.1,962.6 L1398.6,964.8 L1401.1,966.6 L1403.6,971.0 L1406.1,964.8 L1408.6,966.3 L1411.0,965.2 L1413.5,965.6 L1416.0,970.3 L1418.5,970.0 L1421.0,965.2 L1423.5,959.2 L1426.0,958.9 L1428.5,962.1 L1431.0,969.3 L1433.5,970.5 L1436.0,976.9 L1438.4,968.5 L1440.9,968.2 L1443.4,967.3 L1445.9,972.3 L1448.4,971.6 L1450.9,971.6 L1453.4,973.5 L1455.9,970.4 L1458.4,970.2 L1460.9,973.2 L1463.4,975.2 L1465.9,976.6 L1468.3,976.4 L1470.8,982.7 L1473.3,983.2 L1475.8,977.0 L1478.3,987.8 L1480.8,1085.7 L1483.3,1005.2 L1485.8,977.5 L1488.3,982.5 L1490.8,978.9 L1493.3,1008.4 L1495.7,983.4 L1498.2,1009.1 L1500.7,979.5 L1503.2,979.1 L1505.7,976.3 L1508.2,975.3 L1510.7,981.9 L1513.2,982.0 L1515.7,983.4 L1518.2,986.1 L1520.7,985.6 L1523.2,981.6 L1525.6,992.2 L1528.1,984.4 L1530.6,990.9 L1533.1,983.5 L1535.6,982.9 L1538.1,981.5 L1540.6,1024.1 L1543.1,991.9 L1545.6,989.6 L1548.1,989.4 L1550.6,993.1 L1553.0,990.4 L1555.5,987.3 L1558.0,995.5 L1560.5,996.3 L1563.0,997.8 L1565.5,994.8 L1568.0,993.6 L1570.5,994.5 L1573.0,993.1 L1575.5,995.3 L1578.0,1001.0 L1580.5,1003.0 L1582.9,1006.2 L1585.4,999.8 L1587.9,1005.7 L1590.4,1000.6 L1592.9,1005.3 L1595.4,995.9 L1597.9,999.1 L1600.4,1002.0 L1602.9,1003.0 L1605.4,1000.5 L1607.9,999.6 L1610.3,999.7 L1612.8,1000.0 L1615.3,1004.0 L1617.8,1007.0 L1620.3,1004.7 L1622.8,1002.0 L1625.3,1003.0 L1627.8,1010.0 L1630.3,1010.5 L1632.8,1011.1 L1635.3,1006.4 L1637.8,1006.4 L1640.2,1002.3 L1642.7,1011.9 L1645.2,1005.4 L1647.7,1007.9 L1650.2,1010.4 L1652.7,1019.2 L1655.2,1013.8 L1657.7,1014.7" fill="none" stroke="#d3d3d3" stroke-width="2.4" stroke-linejoin="round"/><path d="M1138.0,870.1 L1140.5,872.1 L1143.0,875.9 L1145.5,877.7 L1148.0,865.7 L1150.5,851.8 L1152.9,844.5 L1155.4,836.0 L1157.9,834.5 L1160.4,832.5 L1162.9,822.0 L1165.4,816.3 L1167.9,820.2 L1170.4,814.4 L1172.9,816.6 L1175.4,820.5 L1177.9,825.8 L1180.4,825.4 L1182.8,832.2 L1185.3,843.9 L1187.8,846.6 L1190.3,864.3 L1192.8,847.8 L1195.3,845.7 L1197.8,846.8 L1200.3,844.2 L1202.8,862.0 L1205.3,855.7 L1207.8,867.9 L1210.2,866.4 L1212.7,867.8 L1215.2,869.4 L1217.7,880.0 L1220.2,883.1 L1222.7,876.5 L1225.2,879.8 L1227.7,915.7 L1230.2,917.1 L1232.7,893.2 L1235.2,900.2 L1237.7,897.0 L1240.1,900.5 L1242.6,899.5 L1245.1,895.1 L1247.6,891.1 L1250.1,892.2 L1252.6,888.5 L1255.1,887.4 L1257.6,893.7 L1260.1,892.9 L1262.6,896.5 L1265.1,897.1 L1267.5,911.2 L1270.0,903.7 L1272.5,902.9 L1275.0,905.7 L1277.5,906.5 L1280.0,907.6 L1282.5,906.7 L1285.0,913.6 L1287.5,910.4 L1290.0,905.0 L1292.5,909.7 L1295.0,912.6 L1297.4,912.3 L1299.9,916.2 L1302.4,918.6 L1304.9,922.1 L1307.4,915.5 L1309.9,918.7 L1312.4,924.3 L1314.9,917.1 L1317.4,927.8 L1319.9,924.4 L1322.4,928.4 L1324.8,928.8 L1327.3,931.6 L1329.8,929.9 L1332.3,929.8 L1334.8,930.8 L1337.3,938.9 L1339.8,935.3 L1342.3,935.8 L1344.8,949.8 L1347.3,937.6 L1349.8,932.5 L1352.3,935.9 L1354.7,971.3 L1357.2,936.5 L1359.7,943.1 L1362.2,971.4 L1364.7,943.7 L1367.2,940.1 L1369.7,944.2 L1372.2,950.7 L1374.7,949.0 L1377.2,949.8 L1379.7,964.0 L1382.1,948.3 L1384.6,951.1 L1387.1,967.3 L1389.6,951.3 L1392.1,951.8 L1394.6,949.6 L1397.1,958.5 L1399.6,956.1 L1402.1,952.0 L1404.6,956.0 L1407.1,976.4 L1409.6,993.0 L1412.0,973.2 L1414.5,953.0 L1417.0,955.9 L1419.5,948.6 L1422.0,947.0 L1424.5,953.1 L1427.0,953.6 L1429.5,952.7 L1432.0,954.8 L1434.5,957.5 L1437.0,959.8 L1439.4,962.4 L1441.9,963.8 L1444.4,968.1 L1446.9,988.4 L1449.4,995.7 L1451.9,962.5 L1454.4,965.5 L1456.9,960.9 L1459.4,962.0 L1461.9,963.7 L1464.4,962.5 L1466.9,961.2 L1469.3,965.9 L1471.8,1003.2 L1474.3,969.1 L1476.8,970.7 L1479.3,971.3 L1481.8,967.4 L1484.3,965.6 L1486.8,971.2 L1489.3,968.9 L1491.8,974.8 L1494.3,969.1 L1496.7,967.7 L1499.2,968.9 L1501.7,977.3 L1504.2,974.1 L1506.7,979.1 L1509.2,972.6 L1511.7,977.5 L1514.2,981.7 L1516.7,977.4 L1519.2,971.3 L1521.7,974.9 L1524.2,973.7 L1526.6,980.6 L1529.1,976.5 L1531.6,978.1 L1534.1,980.8 L1536.6,980.7 L1539.1,984.2 L1541.6,979.8 L1544.1,984.3 L1546.6,983.2 L1549.1,991.6 L1551.6,984.4 L1554.0,988.4 L1556.5,987.6 L1559.0,985.9 L1561.5,987.7 L1564.0,984.3 L1566.5,1012.9 L1569.0,979.1 L1571.5,983.7 L1574.0,1009.0 L1576.5,990.9 L1579.0,991.9 L1581.5,991.4 L1583.9,989.5 L1586.4,988.6 L1588.9,986.2 L1591.4,990.0 L1593.9,994.1 L1596.4,989.9 L1598.9,994.3 L1601.4,993.4 L1603.9,996.3 L1606.4,993.5 L1608.9,995.9 L1611.3,1006.8 L1613.8,1000.2 L1616.3,992.9 L1618.8,992.3 L1621.3,996.0 L1623.8,988.9 L1626.3,996.3 L1628.8,996.0 L1631.3,997.8 L1633.8,997.7 L1636.3,998.3 L1638.8,997.1 L1641.2,1003.5 L1643.7,998.2 L1646.2,998.5" fill="none" stroke="#d3d3d3" stroke-width="2.4" stroke-linejoin="round"/><path d="M1137.0,1118.3 L1139.5,1073.6 L1142.0,1023.4 L1144.5,972.8 L1147.0,931.7 L1149.5,872.1 L1151.9,858.0 L1154.4,858.1 L1156.9,861.0 L1159.4,869.9 L1161.9,874.9 L1164.4,872.9 L1166.9,881.2 L1169.4,883.6 L1171.9,884.8 L1174.4,886.9 L1176.9,901.8 L1179.4,903.6 L1181.8,907.3 L1184.3,910.7 L1186.8,916.3 L1189.3,914.0 L1191.8,900.9 L1194.3,906.7 L1196.8,902.3 L1199.3,904.8 L1201.8,903.1 L1204.3,904.2 L1206.8,906.0 L1209.2,903.6 L1211.7,910.1 L1214.2,933.2 L1216.7,915.5 L1219.2,912.7 L1221.7,911.3 L1224.2,941.0 L1226.7,908.9 L1229.2,916.8 L1231.7,929.7 L1234.2,933.8 L1236.7,927.1 L1239.1,930.6 L1241.6,985.7 L1244.1,925.1 L1246.6,935.7 L1249.1,934.9 L1251.6,934.2 L1254.1,946.1 L1256.6,977.4 L1259.1,945.5 L1261.6,947.2 L1264.1,944.2 L1266.5,942.1 L1269.0,956.8 L1271.5,954.7 L1274.0,946.8 L1276.5,953.4 L1279.0,954.6 L1281.5,946.8 L1284.0,961.5 L1286.5,972.3 L1289.0,981.8 L1291.5,1013.1 L1294.0,949.6 L1296.4,955.8 L1298.9,952.5 L1301.4,950.3 L1303.9,950.9 L1306.4,956.8 L1308.9,951.7 L1311.4,954.9 L1313.9,967.2 L1316.4,1003.3 L1318.9,951.6 L1321.4,952.4 L1323.8,951.1 L1326.3,956.2 L1328.8,958.4 L1331.3,960.6 L1333.8,962.9 L1336.3,972.2 L1338.8,971.7 L1341.3,975.8 L1343.8,976.9 L1346.3,975.3 L1348.8,973.1 L1351.3,965.9 L1353.7,973.5 L1356.2,971.5 L1358.7,972.7 L1361.2,973.3 L1363.7,977.9 L1366.2,975.2 L1368.7,971.8 L1371.2,974.3 L1373.7,978.4 L1376.2,977.5 L1378.7,981.3 L1381.1,987.8 L1383.6,988.8 L1386.1,989.0 L1388.6,1013.8 L1391.1,989.3 L1393.6,992.4 L1396.1,995.6 L1398.6,1011.5 L1401.1,995.8 L1403.6,989.2 L1406.1,989.2 L1408.6,987.3 L1411.0,990.1 L1413.5,993.4 L1416.0,991.4 L1418.5,1000.9 L1421.0,993.8 L1423.5,997.5 L1426.0,994.3 L1428.5,993.9 L1431.0,995.8 L1433.5,999.8 L1436.0,997.8 L1438.4,998.3 L1440.9,995.0 L1443.4,993.0 L1445.9,996.0 L1448.4,997.9 L1450.9,1036.1 L1453.4,996.8 L1455.9,1001.8 L1458.4,999.6 L1460.9,998.9 L1463.4,1037.7 L1465.9,1001.8 L1468.3,1004.2 L1470.8,1003.9 L1473.3,1003.1 L1475.8,1005.1 L1478.3,1002.4 L1480.8,1003.8 L1483.3,1020.6 L1485.8,996.5 L1488.3,1003.4 L1490.8,1002.4 L1493.3,1007.3 L1495.7,1003.0 L1498.2,1007.0 L1500.7,1004.1 L1503.2,1005.0 L1505.7,1008.0 L1508.2,1007.2 L1510.7,1009.7 L1513.2,1010.4 L1515.7,1002.5 L1518.2,1004.6 L1520.7,1003.5 L1523.2,1007.0 L1525.6,1011.1 L1528.1,1003.7 L1530.6,1041.3 L1533.1,1051.8 L1535.6,1006.9 L1538.1,1012.6 L1540.6,1029.8 L1543.1,1008.8 L1545.6,1010.4 L1548.1,1013.0 L1550.6,1015.2 L1553.0,1013.6 L1555.5,1009.2 L1558.0,1011.8 L1560.5,1009.7 L1563.0,1016.7 L1565.5,1013.4 L1568.0,1012.7 L1570.5,1015.6 L1573.0,1015.6 L1575.5,1016.4 L1578.0,1017.9 L1580.5,1014.2 L1582.9,1013.8 L1585.4,1018.2 L1587.9,1021.9 L1590.4,1020.4 L1592.9,1029.1 L1595.4,1019.8 L1597.9,1020.7 L1600.4,1015.4 L1602.9,1023.3 L1605.4,1027.6 L1607.9,1025.5 L1610.3,1028.5 L1612.8,1023.9 L1615.3,1027.0 L1617.8,1028.7 L1620.3,1030.8 L1622.8,1031.0 L1625.3,1025.5 L1627.8,1023.7 L1630.3,1019.8 L1632.8,1023.2 L1635.3,1027.3 L1637.8,1031.3 L1640.2,1029.9 L1642.7,1036.0" fill="none" stroke="#d3d3d3" stroke-width="2.4" stroke-linejoin="round"/><rect x="1136.9" y="1111.8" width="1289.9" height="199.8" fill="rgba(100,80,190,0.25)"/><line x1="1136.9" y1="1111.8" x2="1136.9" y2="1311.6" stroke="rgba(91,79,196,.35)" stroke-width="2"/><line x1="1366.5" y1="716" x2="1366.5" y2="1311.6" stroke="#5b4fc4" stroke-width="1.7" stroke-dasharray="12,10"/><line x1="1528.5" y1="716" x2="1528.5" y2="1311.6" stroke="#5b4fc4" stroke-width="1.7" stroke-dasharray="12,10"/><path d="M1366.0,912.0 L1370.0,913.8 L1374.0,915.5 L1378.0,917.1 L1382.0,918.8 L1386.0,920.4 L1390.0,921.9 L1394.0,923.4 L1398.0,924.9 L1402.0,926.4 L1406.0,927.8 L1410.0,929.2 L1414.0,930.6 L1418.0,931.9 L1422.0,933.2 L1426.0,934.5 L1430.0,935.8 L1434.0,937.0 L1438.0,938.2 L1442.0,939.4 L1446.0,940.6 L1450.0,941.7 L1454.0,942.9 L1458.0,944.0 L1462.0,945.1 L1466.0,946.2 L1470.0,947.2 L1474.0,948.3 L1478.0,949.3 L1482.0,950.3 L1486.0,951.3 L1490.0,952.3 L1494.0,953.3 L1498.0,954.2 L1502.0,955.2 L1506.0,956.1 L1510.0,957.0 L1514.0,957.9 L1518.0,958.8 L1522.0,959.7 L1526.0,960.6 L1530.0,961.4 L1534.0,962.3 L1538.0,963.1 L1542.0,963.9 L1546.0,964.7 L1550.0,965.6 L1554.0,966.4 L1558.0,967.1 L1562.0,967.9 L1566.0,968.7 L1570.0,969.4 L1574.0,970.2 L1578.0,970.9 L1582.0,971.7 L1586.0,972.4 L1590.0,973.1 L1594.0,973.8 L1598.0,974.5 L1602.0,975.2 L1606.0,975.9 L1610.0,976.6 L1614.0,977.3 L1618.0,978.0 L1622.0,978.6 L1626.0,979.3 L1630.0,979.9 L1634.0,980.6 L1638.0,981.2 L1642.0,981.8 L1646.0,982.5 L1650.0,983.1 L1654.0,983.7 L1658.0,984.3 L1662.0,984.9 L1666.0,985.5" fill="none" stroke="#8a80d6" stroke-width="1.6" stroke-dasharray="8,5"/><polygon points="1665.0,985.8 1684.0,989.0 1703.1,992.2 1722.1,995.4 1741.2,998.6 1760.2,1001.9 1779.3,1005.1 1798.3,1008.4 1817.4,1011.6 1836.4,1014.9 1855.5,1018.2 1874.5,1021.5 1893.5,1024.9 1912.6,1028.2 1931.6,1031.6 1950.7,1034.9 1969.7,1038.3 1988.8,1041.7 2007.8,1045.1 2026.9,1048.5 2045.9,1051.9 2064.9,1055.3 2084.0,1058.8 2103.0,1062.3 2122.1,1065.7 2141.1,1069.2 2160.2,1072.7 2179.2,1076.2 2198.3,1079.7 2217.3,1083.3 2236.4,1086.8 2255.4,1090.4 2274.4,1094.0 2293.5,1097.6 2312.5,1101.2 2331.6,1104.8 2350.6,1108.4 2369.7,1112.0 2388.7,1115.7 2407.8,1119.3 2426.8,1123.0 2426.8,1162.0 2407.8,1157.6 2388.7,1153.3 2369.7,1148.9 2350.6,1144.6 2331.6,1140.3 2312.5,1136.0 2293.5,1131.7 2274.4,1127.4 2255.4,1123.2 2236.4,1118.9 2217.3,1114.6 2198.3,1110.4 2179.2,1106.2 2160.2,1102.0 2141.1,1097.8 2122.1,1093.6 2103.0,1089.4 2084.0,1085.2 2064.9,1081.1 2045.9,1076.9 2026.9,1072.8 2007.8,1068.6 1988.8,1064.5 1969.7,1060.4 1950.7,1056.3 1931.6,1052.3 1912.6,1048.2 1893.5,1044.1 1874.5,1040.1 1855.5,1036.0 1836.4,1032.0 1817.4,1028.0 1798.3,1024.0 1779.3,1020.0 1760.2,1016.0 1741.2,1012.1 1722.1,1008.1 1703.1,1004.2 1684.0,1000.2 1665.0,996.3" fill="rgba(91,79,196,0.5)"/><path d="M1665.0,985.8 L1684.0,989.0 L1703.1,992.2 L1722.1,995.4 L1741.2,998.6 L1760.2,1001.9 L1779.3,1005.1 L1798.3,1008.4 L1817.4,1011.6 L1836.4,1014.9 L1855.5,1018.2 L1874.5,1021.5 L1893.5,1024.9 L1912.6,1028.2 L1931.6,1031.6 L1950.7,1034.9 L1969.7,1038.3 L1988.8,1041.7 L2007.8,1045.1 L2026.9,1048.5 L2045.9,1051.9 L2064.9,1055.3 L2084.0,1058.8 L2103.0,1062.3 L2122.1,1065.7 L2141.1,1069.2 L2160.2,1072.7 L2179.2,1076.2 L2198.3,1079.7 L2217.3,1083.3 L2236.4,1086.8 L2255.4,1090.4 L2274.4,1094.0 L2293.5,1097.6 L2312.5,1101.2 L2331.6,1104.8 L2350.6,1108.4 L2369.7,1112.0 L2388.7,1115.7 L2407.8,1119.3 L2426.8,1123.0" fill="none" stroke="#5b4fc4" stroke-width="3.2"/><path d="M1665.0,996.3 L1684.0,1000.2 L1703.1,1004.2 L1722.1,1008.1 L1741.2,1012.1 L1760.2,1016.0 L1779.3,1020.0 L1798.3,1024.0 L1817.4,1028.0 L1836.4,1032.0 L1855.5,1036.0 L1874.5,1040.1 L1893.5,1044.1 L1912.6,1048.2 L1931.6,1052.3 L1950.7,1056.3 L1969.7,1060.4 L1988.8,1064.5 L2007.8,1068.6 L2026.9,1072.8 L2045.9,1076.9 L2064.9,1081.1 L2084.0,1085.2 L2103.0,1089.4 L2122.1,1093.6 L2141.1,1097.8 L2160.2,1102.0 L2179.2,1106.2 L2198.3,1110.4 L2217.3,1114.6 L2236.4,1118.9 L2255.4,1123.2 L2274.4,1127.4 L2293.5,1131.7 L2312.5,1136.0 L2331.6,1140.3 L2350.6,1144.6 L2369.7,1148.9 L2388.7,1153.3 L2407.8,1157.6 L2426.8,1162.0" fill="none" stroke="#5b4fc4" stroke-width="3.2"/><path d="M1665.0,991.1 L1684.0,994.6 L1703.1,998.2 L1722.1,1001.8 L1741.2,1005.3 L1760.2,1008.9 L1779.3,1012.6 L1798.3,1016.2 L1817.4,1019.8 L1836.4,1023.5 L1855.5,1027.1 L1874.5,1030.8 L1893.5,1034.5 L1912.6,1038.2 L1931.6,1041.9 L1950.7,1045.6 L1969.7,1049.4 L1988.8,1053.1 L2007.8,1056.9 L2026.9,1060.6 L2045.9,1064.4 L2064.9,1068.2 L2084.0,1072.0 L2103.0,1075.8 L2122.1,1079.6 L2141.1,1083.5 L2160.2,1087.3 L2179.2,1091.2 L2198.3,1095.1 L2217.3,1099.0 L2236.4,1102.9 L2255.4,1106.8 L2274.4,1110.7 L2293.5,1114.6 L2312.5,1118.6 L2331.6,1122.5 L2350.6,1126.5 L2369.7,1130.5 L2388.7,1134.5 L2407.8,1138.5 L2426.8,1142.5" fill="none" stroke="#5b4fc4" stroke-width="2.2" stroke-dasharray="12,7,3,7"/><path d="M1138.0,871.0 L1139.6,791.7 L1141.7,811.0 L1143.2,806.7 L1144.9,815.2 L1147.0,816.0 L1151.3,824.8 L1157.7,830.2 L1162.0,832.3 L1165.2,841.9 L1170.5,845.1 L1173.7,857.9 L1176.9,839.8 L1182.3,847.2 L1187.6,849.4 L1190.8,851.5 L1194.0,868.6 L1197.2,864.3 L1202.5,896.3 L1208.9,871.8 L1212.1,907.0 L1215.3,888.8 L1217.5,889.9 L1221.7,915.5 L1224.9,945.4 L1231.3,879.2 L1234.5,936.8 L1236.7,913.4 L1239.9,936.8 L1246.3,905.9 L1249.5,913.4 L1255.9,896.3 L1261.2,913.4 L1264.4,901.6 L1273.0,904.8 L1279.4,915.5 L1283.7,917.6 L1288.9,905.9 L1292.2,935.8 L1295.4,905.9 L1304.0,902.7 L1308.2,913.4 L1315.6,911.2 L1317.8,917.6 L1323.1,930.4 L1326.3,917.6 L1331.6,910.2 L1334.8,910.2 L1340.2,941.1 L1343.4,953.9 L1349.8,941.1 L1354.0,960.3 L1356.2,912.3 L1364.7,915.5 L1366.9,924.0 L1371.1,917.6 L1377.5,934.7 L1383.9,932.6 L1389.3,943.2 L1394.6,936.8 L1398.5,927.7 L1401.0,928.4 L1403.5,929.4 L1406.0,932.3 L1408.5,931.7 L1410.9,928.7 L1413.4,932.9 L1415.9,933.3 L1418.4,934.1 L1420.9,950.0 L1423.4,937.0 L1425.9,940.3 L1428.4,940.5 L1430.9,939.7 L1433.4,937.9 L1435.9,937.2 L1438.4,940.6 L1440.8,944.8 L1443.3,943.4 L1445.8,943.1 L1448.3,1024.5 L1450.8,941.2 L1453.3,943.4 L1455.8,946.5 L1458.3,948.8 L1460.8,947.2 L1463.3,948.7 L1465.8,949.3 L1468.2,951.3 L1470.7,983.5 L1473.2,951.1 L1475.7,947.4 L1478.2,943.9 L1480.7,948.3 L1483.2,949.3 L1485.7,995.0 L1488.2,955.9 L1490.7,952.1 L1493.2,956.5 L1495.7,953.6 L1498.1,955.4 L1500.6,955.8 L1503.1,957.4 L1505.6,960.0 L1508.1,960.7 L1510.6,970.0 L1513.1,961.6 L1515.6,961.9 L1518.1,959.6 L1520.6,959.0 L1523.1,959.9 L1525.5,962.9 L1528.0,962.3 L1530.5,968.9 L1533.0,963.4 L1535.5,961.3 L1538.0,965.8 L1540.5,969.1 L1543.0,968.1 L1545.5,982.0 L1548.0,971.0 L1550.5,968.2 L1553.0,964.3 L1555.4,965.7 L1557.9,970.2 L1560.4,980.0 L1562.9,968.6 L1565.4,970.3 L1567.9,969.7 L1570.4,972.4 L1572.9,973.2 L1575.4,978.0 L1577.9,975.6 L1580.4,972.0 L1582.8,971.4 L1585.3,970.8 L1587.8,975.4 L1590.3,983.5 L1592.8,974.2 L1595.3,976.8 L1597.8,974.2 L1600.3,974.8 L1602.8,971.4 L1605.3,972.5 L1607.8,974.4 L1610.3,977.7 L1612.7,981.0 L1615.2,979.2 L1617.7,979.6 L1620.2,990.0 L1622.7,982.4 L1625.2,983.0 L1627.7,981.8 L1630.2,978.6 L1632.7,982.6 L1635.2,982.8 L1637.7,985.2 L1640.1,983.1 L1642.6,1009.0 L1645.1,983.5 L1647.6,987.4 L1650.1,985.1 L1652.6,983.1 L1655.1,981.2 L1657.6,983.3 L1660.1,1065.5 L1662.6,988.3 L1663.0,981.5 L1666.0,985.0" fill="none" stroke="#5b4fc4" stroke-width="2.7" stroke-linejoin="round"/><g font-family="Liberation Sans"><text x="1126.5" y="1312.4" font-size="17.5" fill="#444" text-anchor="end">0.1</text><text x="1132" y="1255.1" font-size="12.5" fill="#555" text-anchor="end">2</text><text x="1132" y="1220.2" font-size="12.5" fill="#555" text-anchor="end">3</text><text x="1132" y="1195.5" font-size="12.5" fill="#555" text-anchor="end">4</text><text x="1132" y="1176.3" font-size="12.5" fill="#555" text-anchor="end">5</text><text x="1132" y="1160.7" font-size="12.5" fill="#555" text-anchor="end">6</text><text x="1132" y="1147.4" font-size="12.5" fill="#555" text-anchor="end">7</text><text x="1132" y="1136.0" font-size="12.5" fill="#555" text-anchor="end">8</text><text x="1132" y="1125.9" font-size="12.5" fill="#555" text-anchor="end">9</text><text x="1126.5" y="1114.6" font-size="17.5" fill="#444" text-anchor="end">1</text><text x="1132" y="1057.3" font-size="12.5" fill="#555" text-anchor="end">2</text><text x="1132" y="1022.4" font-size="12.5" fill="#555" text-anchor="end">3</text><text x="1132" y="997.7" font-size="12.5" fill="#555" text-anchor="end">4</text><text x="1132" y="978.5" font-size="12.5" fill="#555" text-anchor="end">5</text><text x="1132" y="962.9" font-size="12.5" fill="#555" text-anchor="end">6</text><text x="1132" y="949.6" font-size="12.5" fill="#555" text-anchor="end">7</text><text x="1132" y="938.2" font-size="12.5" fill="#555" text-anchor="end">8</text><text x="1132" y="928.1" font-size="12.5" fill="#555" text-anchor="end">9</text><text x="1108" y="917.3" font-size="17.5" fill="#444" textLength="19" lengthAdjust="spacingAndGlyphs">10</text><text x="1132" y="859.5" font-size="12.5" fill="#555" text-anchor="end">2</text><text x="1132" y="824.6" font-size="12.5" fill="#555" text-anchor="end">3</text><text x="1132" y="799.9" font-size="12.5" fill="#555" text-anchor="end">4</text><text x="1132" y="780.7" font-size="12.5" fill="#555" text-anchor="end">5</text><text x="1132" y="765.1" font-size="12.5" fill="#555" text-anchor="end">6</text><text x="1132" y="751.8" font-size="12.5" fill="#555" text-anchor="end">7</text><text x="1132" y="740.4" font-size="12.5" fill="#555" text-anchor="end">8</text><text x="1132" y="730.3" font-size="12.5" fill="#555" text-anchor="end">9</text><text x="1096" y="719.5" font-size="17.5" fill="#444" textLength="31" lengthAdjust="spacingAndGlyphs">100</text><text x="1617.1" y="1331.2" font-size="18.5" fill="#444" textLength="32" lengthAdjust="spacingAndGlyphs">200</text><text x="1866.2" y="1331.2" font-size="18.5" fill="#444" textLength="32" lengthAdjust="spacingAndGlyphs">300</text><text x="2115.3" y="1331.2" font-size="18.5" fill="#444" textLength="32" lengthAdjust="spacingAndGlyphs">400</text><text x="2364.4" y="1331.2" font-size="18.5" fill="#444" textLength="32" lengthAdjust="spacingAndGlyphs">500</text><text x="1687" y="1387" font-size="22.5" fill="#444" textLength="188.5" lengthAdjust="spacingAndGlyphs">Production Months</text><text transform="translate(1084.5,1187) rotate(-90)" x="0" y="0" font-size="21.8" fill="#444" textLength="341" lengthAdjust="spacingAndGlyphs">Gas Production Rate (E3m3/day)</text></g></svg><div class="r" style="left:1055.8px;top:1309px;width:448.60000000000014px;height:67.79999999999995px;background:#5f9f54;border-radius:6px;box-shadow:0 3px 6px rgba(0,0,0,.3)"></div><svg class="r" style="left:1084.2px;top:1328.5px" width="29" height="29" viewBox="0 0 24 24"><path fill="#fff" d="M12 2C6.48 2 2 6.48 2 12s4.48 10 10 10 10-4.48 10-10S17.52 2 12 2zm-2 15l-5-5 1.41-1.41L10 14.17l7.59-7.59L19 8l-9 9z"/></svg><div class="t" style="left:1123.62px;top:1333.01px;font-size:20.87px;line-height:20.87px;color:#fff;transform:scaleX(0.9836);transform-origin:0 0;"><span>Project New Project saved successfully</span></div><div class="r" style="left:0px;top:0px;width:2560px;height:92px;background:#225ab4;box-shadow:0 3px 5px -1px rgba(0,0,0,.25),0 5px 8px 0 rgba(0,0,0,.16),0 1px 14px 0 rgba(0,0,0,.12)"></div><div class="r" style="left:0px;top:0px;width:2px;height:92px;background:#4d7bc4"></div><div class="r" style="left:0px;top:0px;width:2560px;height:1px;background:#5c6f94"></div><svg class="r" style="left:28.7px;top:28.7px" width="34.6" height="34.6" viewBox="0 0 24 24"><path fill="#fff" d="M3 18h18v-2H3v2zm0-5h18v-2H3v2zm0-7v2h18V6H3z"/></svg><svg class="r" style="left:120px;top:12px;" width="68" height="68" viewBox="0 0 68 68"><circle cx="34" cy="34.5" r="27.3" fill="none" stroke="#fff" stroke-width="2.6"/><circle cx="34" cy="34.5" r="22" fill="none" stroke="#fff" stroke-width="1"/></svg><div class="t" style="left:135.22px;top:20.50px;font-size:45.00px;line-height:45.00px;color:#fff;transform:scaleX(0.9517);transform-origin:0 0;"><span>æ</span></div><div class="t" style="left:211.64px;top:28.11px;font-size:35.36px;line-height:35.36px;color:#fff;transform:scaleX(0.9277);transform-origin:0 0;-webkit-text-stroke:0.9px #fff;"><span>ATHENA</span></div><svg class="r" style="left:2314.2px;top:29.2px" width="34.5" height="34.5" viewBox="0 0 24 24"><path fill="#fff" d="M12 22c1.1 0 2-.9 2-2h-4c0 1.1.89 2 2 2zm6-6v-5c0-3.07-1.64-5.64-4.5-6.32V4c0-.83-.67-1.5-1.5-1.5s-1.5.67-1.5 1.5v.68C7.63 5.36 6 7.92 6 11v5l-2 2v1h16v-1l-2-2z"/></svg><svg class="r" style="left:2399.8px;top:28.9px" width="35" height="35" viewBox="0 0 24 24"><path fill="#fff" d="M12 2C6.48 2 2 6.48 2 12s4.48 10 10 10 10-4.48 10-10S17.52 2 12 2zm1 17h-2v-2h2v2zm2.07-7.75l-.9.92C13.45 12.9 13 13.5 13 15h-2v-.5c0-1.1.45-2.1 1.17-2.83l1.24-1.26c.37-.36.59-.86.59-1.41 0-1.1-.9-2-2-2s-2 .9-2 2H8c0-2.21 1.79-4 4-4s4 1.79 4 4c0 .88-.36 1.68-.93 2.25z"/></svg><div class="r" style="left:2474.8px;top:18.5px;width:56px;height:56px;border-radius:50%;background:#2b2b2b"></div><div class="t" style="left:2484.95px;top:33.26px;font-size:27.17px;line-height:27.17px;color:#fff;transform:scaleX(0.9968);transform-origin:0 0;"><span>AB</span></div><svg class="r" style="left:0px;top:1386px;" width="20" height="20" viewBox="0 0 20 20"><path d="M0 4 A16 16 0 0 0 16 20 L0 20 Z" fill="#1c1c1c"/></svg><svg class="r" style="left:2540px;top:1386px;" width="20" height="20" viewBox="0 0 20 20"><path d="M20 4 A16 16 0 0 1 4 20 L20 20 Z" fill="#1c1c1c"/></svg>
</body></html>
